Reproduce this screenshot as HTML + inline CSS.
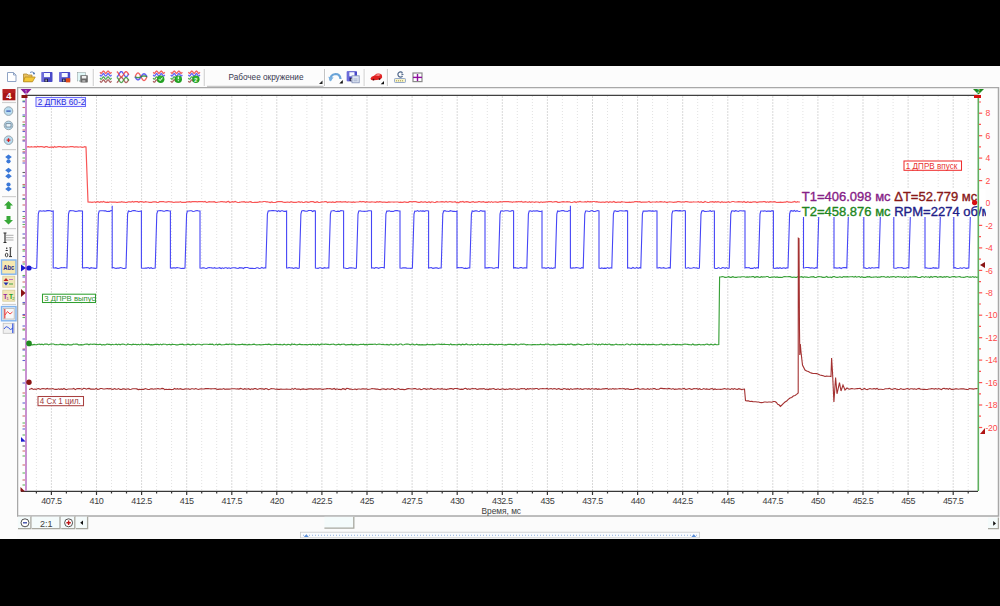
<!DOCTYPE html>
<html><head><meta charset="utf-8">
<style>
html,body{margin:0;padding:0;width:1000px;height:606px;overflow:hidden;background:#fff;}
body{position:relative;font-family:"Liberation Sans",sans-serif;}
.blk{position:absolute;left:0;width:1000px;background:#000;}
svg{position:absolute;left:0;top:0;}
</style></head><body>
<div class="blk" style="top:0;height:66px"></div>
<div class="blk" style="top:539px;height:67px"></div>
<svg width="1000" height="606" viewBox="0 0 1000 606">
<defs><clipPath id="pc"><rect x="800" y="185" width="186" height="34"/></clipPath></defs>
<rect x="0" y="66" width="1000" height="473" fill="#fbfbfb"/>
<rect x="17.5" y="87.5" width="981" height="428.5" fill="#fdfdfd" stroke="#a8a8a8" stroke-width="1.5"/>
<rect x="26" y="95" width="952" height="396" fill="#ffffff"/>
<line x1="36.4" y1="96" x2="36.4" y2="491" stroke="#e2e2e2" stroke-width="1" stroke-dasharray="1 2"/>
<line x1="51.4" y1="96" x2="51.4" y2="491" stroke="#d9d9d9" stroke-width="1" stroke-dasharray="2 1"/>
<line x1="66.4" y1="96" x2="66.4" y2="491" stroke="#e2e2e2" stroke-width="1" stroke-dasharray="1 2"/>
<line x1="81.5" y1="96" x2="81.5" y2="491" stroke="#e2e2e2" stroke-width="1" stroke-dasharray="1 2"/>
<line x1="96.5" y1="96" x2="96.5" y2="491" stroke="#d9d9d9" stroke-width="1" stroke-dasharray="2 1"/>
<line x1="111.5" y1="96" x2="111.5" y2="491" stroke="#e2e2e2" stroke-width="1" stroke-dasharray="1 2"/>
<line x1="126.5" y1="96" x2="126.5" y2="491" stroke="#e2e2e2" stroke-width="1" stroke-dasharray="1 2"/>
<line x1="141.6" y1="96" x2="141.6" y2="491" stroke="#d9d9d9" stroke-width="1" stroke-dasharray="2 1"/>
<line x1="156.6" y1="96" x2="156.6" y2="491" stroke="#e2e2e2" stroke-width="1" stroke-dasharray="1 2"/>
<line x1="171.6" y1="96" x2="171.6" y2="491" stroke="#e2e2e2" stroke-width="1" stroke-dasharray="1 2"/>
<line x1="186.7" y1="96" x2="186.7" y2="491" stroke="#d9d9d9" stroke-width="1" stroke-dasharray="2 1"/>
<line x1="201.7" y1="96" x2="201.7" y2="491" stroke="#e2e2e2" stroke-width="1" stroke-dasharray="1 2"/>
<line x1="216.7" y1="96" x2="216.7" y2="491" stroke="#e2e2e2" stroke-width="1" stroke-dasharray="1 2"/>
<line x1="231.8" y1="96" x2="231.8" y2="491" stroke="#d9d9d9" stroke-width="1" stroke-dasharray="2 1"/>
<line x1="246.8" y1="96" x2="246.8" y2="491" stroke="#e2e2e2" stroke-width="1" stroke-dasharray="1 2"/>
<line x1="261.8" y1="96" x2="261.8" y2="491" stroke="#e2e2e2" stroke-width="1" stroke-dasharray="1 2"/>
<line x1="276.8" y1="96" x2="276.8" y2="491" stroke="#d9d9d9" stroke-width="1" stroke-dasharray="2 1"/>
<line x1="291.9" y1="96" x2="291.9" y2="491" stroke="#e2e2e2" stroke-width="1" stroke-dasharray="1 2"/>
<line x1="306.9" y1="96" x2="306.9" y2="491" stroke="#e2e2e2" stroke-width="1" stroke-dasharray="1 2"/>
<line x1="321.9" y1="96" x2="321.9" y2="491" stroke="#d9d9d9" stroke-width="1" stroke-dasharray="2 1"/>
<line x1="337" y1="96" x2="337" y2="491" stroke="#e2e2e2" stroke-width="1" stroke-dasharray="1 2"/>
<line x1="352" y1="96" x2="352" y2="491" stroke="#e2e2e2" stroke-width="1" stroke-dasharray="1 2"/>
<line x1="367" y1="96" x2="367" y2="491" stroke="#d9d9d9" stroke-width="1" stroke-dasharray="2 1"/>
<line x1="382.1" y1="96" x2="382.1" y2="491" stroke="#e2e2e2" stroke-width="1" stroke-dasharray="1 2"/>
<line x1="397.1" y1="96" x2="397.1" y2="491" stroke="#e2e2e2" stroke-width="1" stroke-dasharray="1 2"/>
<line x1="412.1" y1="96" x2="412.1" y2="491" stroke="#d9d9d9" stroke-width="1" stroke-dasharray="2 1"/>
<line x1="427.1" y1="96" x2="427.1" y2="491" stroke="#e2e2e2" stroke-width="1" stroke-dasharray="1 2"/>
<line x1="442.2" y1="96" x2="442.2" y2="491" stroke="#e2e2e2" stroke-width="1" stroke-dasharray="1 2"/>
<line x1="457.2" y1="96" x2="457.2" y2="491" stroke="#d9d9d9" stroke-width="1" stroke-dasharray="2 1"/>
<line x1="472.2" y1="96" x2="472.2" y2="491" stroke="#e2e2e2" stroke-width="1" stroke-dasharray="1 2"/>
<line x1="487.3" y1="96" x2="487.3" y2="491" stroke="#e2e2e2" stroke-width="1" stroke-dasharray="1 2"/>
<line x1="502.3" y1="96" x2="502.3" y2="491" stroke="#d9d9d9" stroke-width="1" stroke-dasharray="2 1"/>
<line x1="517.3" y1="96" x2="517.3" y2="491" stroke="#e2e2e2" stroke-width="1" stroke-dasharray="1 2"/>
<line x1="532.4" y1="96" x2="532.4" y2="491" stroke="#e2e2e2" stroke-width="1" stroke-dasharray="1 2"/>
<line x1="547.4" y1="96" x2="547.4" y2="491" stroke="#d9d9d9" stroke-width="1" stroke-dasharray="2 1"/>
<line x1="562.4" y1="96" x2="562.4" y2="491" stroke="#e2e2e2" stroke-width="1" stroke-dasharray="1 2"/>
<line x1="577.4" y1="96" x2="577.4" y2="491" stroke="#e2e2e2" stroke-width="1" stroke-dasharray="1 2"/>
<line x1="592.5" y1="96" x2="592.5" y2="491" stroke="#d9d9d9" stroke-width="1" stroke-dasharray="2 1"/>
<line x1="607.5" y1="96" x2="607.5" y2="491" stroke="#e2e2e2" stroke-width="1" stroke-dasharray="1 2"/>
<line x1="622.5" y1="96" x2="622.5" y2="491" stroke="#e2e2e2" stroke-width="1" stroke-dasharray="1 2"/>
<line x1="637.6" y1="96" x2="637.6" y2="491" stroke="#d9d9d9" stroke-width="1" stroke-dasharray="2 1"/>
<line x1="652.6" y1="96" x2="652.6" y2="491" stroke="#e2e2e2" stroke-width="1" stroke-dasharray="1 2"/>
<line x1="667.6" y1="96" x2="667.6" y2="491" stroke="#e2e2e2" stroke-width="1" stroke-dasharray="1 2"/>
<line x1="682.7" y1="96" x2="682.7" y2="491" stroke="#d9d9d9" stroke-width="1" stroke-dasharray="2 1"/>
<line x1="697.7" y1="96" x2="697.7" y2="491" stroke="#e2e2e2" stroke-width="1" stroke-dasharray="1 2"/>
<line x1="712.7" y1="96" x2="712.7" y2="491" stroke="#e2e2e2" stroke-width="1" stroke-dasharray="1 2"/>
<line x1="727.8" y1="96" x2="727.8" y2="491" stroke="#d9d9d9" stroke-width="1" stroke-dasharray="2 1"/>
<line x1="742.8" y1="96" x2="742.8" y2="491" stroke="#e2e2e2" stroke-width="1" stroke-dasharray="1 2"/>
<line x1="757.8" y1="96" x2="757.8" y2="491" stroke="#e2e2e2" stroke-width="1" stroke-dasharray="1 2"/>
<line x1="772.8" y1="96" x2="772.8" y2="491" stroke="#d9d9d9" stroke-width="1" stroke-dasharray="2 1"/>
<line x1="787.9" y1="96" x2="787.9" y2="491" stroke="#e2e2e2" stroke-width="1" stroke-dasharray="1 2"/>
<line x1="802.9" y1="96" x2="802.9" y2="491" stroke="#e2e2e2" stroke-width="1" stroke-dasharray="1 2"/>
<line x1="817.9" y1="96" x2="817.9" y2="491" stroke="#d9d9d9" stroke-width="1" stroke-dasharray="2 1"/>
<line x1="833" y1="96" x2="833" y2="491" stroke="#e2e2e2" stroke-width="1" stroke-dasharray="1 2"/>
<line x1="848" y1="96" x2="848" y2="491" stroke="#e2e2e2" stroke-width="1" stroke-dasharray="1 2"/>
<line x1="863" y1="96" x2="863" y2="491" stroke="#d9d9d9" stroke-width="1" stroke-dasharray="2 1"/>
<line x1="878" y1="96" x2="878" y2="491" stroke="#e2e2e2" stroke-width="1" stroke-dasharray="1 2"/>
<line x1="893.1" y1="96" x2="893.1" y2="491" stroke="#e2e2e2" stroke-width="1" stroke-dasharray="1 2"/>
<line x1="908.1" y1="96" x2="908.1" y2="491" stroke="#d9d9d9" stroke-width="1" stroke-dasharray="2 1"/>
<line x1="923.1" y1="96" x2="923.1" y2="491" stroke="#e2e2e2" stroke-width="1" stroke-dasharray="1 2"/>
<line x1="938.2" y1="96" x2="938.2" y2="491" stroke="#e2e2e2" stroke-width="1" stroke-dasharray="1 2"/>
<line x1="953.2" y1="96" x2="953.2" y2="491" stroke="#d9d9d9" stroke-width="1" stroke-dasharray="2 1"/>
<line x1="968.2" y1="96" x2="968.2" y2="491" stroke="#e2e2e2" stroke-width="1" stroke-dasharray="1 2"/>
<line x1="26" y1="95.3" x2="978" y2="95.3" stroke="#404040" stroke-width="1.3"/>
<line x1="21" y1="491.4" x2="978" y2="491.4" stroke="#383838" stroke-width="1.4"/>
<line x1="36.4" y1="491" x2="36.4" y2="493.5" stroke="#333" stroke-width="1.2"/>
<line x1="51.4" y1="491" x2="51.4" y2="495" stroke="#333" stroke-width="1.2"/>
<line x1="66.4" y1="491" x2="66.4" y2="493.5" stroke="#333" stroke-width="1.2"/>
<line x1="81.5" y1="491" x2="81.5" y2="493.5" stroke="#333" stroke-width="1.2"/>
<line x1="96.5" y1="491" x2="96.5" y2="495" stroke="#333" stroke-width="1.2"/>
<line x1="111.5" y1="491" x2="111.5" y2="493.5" stroke="#333" stroke-width="1.2"/>
<line x1="126.5" y1="491" x2="126.5" y2="493.5" stroke="#333" stroke-width="1.2"/>
<line x1="141.6" y1="491" x2="141.6" y2="495" stroke="#333" stroke-width="1.2"/>
<line x1="156.6" y1="491" x2="156.6" y2="493.5" stroke="#333" stroke-width="1.2"/>
<line x1="171.6" y1="491" x2="171.6" y2="493.5" stroke="#333" stroke-width="1.2"/>
<line x1="186.7" y1="491" x2="186.7" y2="495" stroke="#333" stroke-width="1.2"/>
<line x1="201.7" y1="491" x2="201.7" y2="493.5" stroke="#333" stroke-width="1.2"/>
<line x1="216.7" y1="491" x2="216.7" y2="493.5" stroke="#333" stroke-width="1.2"/>
<line x1="231.8" y1="491" x2="231.8" y2="495" stroke="#333" stroke-width="1.2"/>
<line x1="246.8" y1="491" x2="246.8" y2="493.5" stroke="#333" stroke-width="1.2"/>
<line x1="261.8" y1="491" x2="261.8" y2="493.5" stroke="#333" stroke-width="1.2"/>
<line x1="276.8" y1="491" x2="276.8" y2="495" stroke="#333" stroke-width="1.2"/>
<line x1="291.9" y1="491" x2="291.9" y2="493.5" stroke="#333" stroke-width="1.2"/>
<line x1="306.9" y1="491" x2="306.9" y2="493.5" stroke="#333" stroke-width="1.2"/>
<line x1="321.9" y1="491" x2="321.9" y2="495" stroke="#333" stroke-width="1.2"/>
<line x1="337" y1="491" x2="337" y2="493.5" stroke="#333" stroke-width="1.2"/>
<line x1="352" y1="491" x2="352" y2="493.5" stroke="#333" stroke-width="1.2"/>
<line x1="367" y1="491" x2="367" y2="495" stroke="#333" stroke-width="1.2"/>
<line x1="382.1" y1="491" x2="382.1" y2="493.5" stroke="#333" stroke-width="1.2"/>
<line x1="397.1" y1="491" x2="397.1" y2="493.5" stroke="#333" stroke-width="1.2"/>
<line x1="412.1" y1="491" x2="412.1" y2="495" stroke="#333" stroke-width="1.2"/>
<line x1="427.1" y1="491" x2="427.1" y2="493.5" stroke="#333" stroke-width="1.2"/>
<line x1="442.2" y1="491" x2="442.2" y2="493.5" stroke="#333" stroke-width="1.2"/>
<line x1="457.2" y1="491" x2="457.2" y2="495" stroke="#333" stroke-width="1.2"/>
<line x1="472.2" y1="491" x2="472.2" y2="493.5" stroke="#333" stroke-width="1.2"/>
<line x1="487.3" y1="491" x2="487.3" y2="493.5" stroke="#333" stroke-width="1.2"/>
<line x1="502.3" y1="491" x2="502.3" y2="495" stroke="#333" stroke-width="1.2"/>
<line x1="517.3" y1="491" x2="517.3" y2="493.5" stroke="#333" stroke-width="1.2"/>
<line x1="532.4" y1="491" x2="532.4" y2="493.5" stroke="#333" stroke-width="1.2"/>
<line x1="547.4" y1="491" x2="547.4" y2="495" stroke="#333" stroke-width="1.2"/>
<line x1="562.4" y1="491" x2="562.4" y2="493.5" stroke="#333" stroke-width="1.2"/>
<line x1="577.4" y1="491" x2="577.4" y2="493.5" stroke="#333" stroke-width="1.2"/>
<line x1="592.5" y1="491" x2="592.5" y2="495" stroke="#333" stroke-width="1.2"/>
<line x1="607.5" y1="491" x2="607.5" y2="493.5" stroke="#333" stroke-width="1.2"/>
<line x1="622.5" y1="491" x2="622.5" y2="493.5" stroke="#333" stroke-width="1.2"/>
<line x1="637.6" y1="491" x2="637.6" y2="495" stroke="#333" stroke-width="1.2"/>
<line x1="652.6" y1="491" x2="652.6" y2="493.5" stroke="#333" stroke-width="1.2"/>
<line x1="667.6" y1="491" x2="667.6" y2="493.5" stroke="#333" stroke-width="1.2"/>
<line x1="682.7" y1="491" x2="682.7" y2="495" stroke="#333" stroke-width="1.2"/>
<line x1="697.7" y1="491" x2="697.7" y2="493.5" stroke="#333" stroke-width="1.2"/>
<line x1="712.7" y1="491" x2="712.7" y2="493.5" stroke="#333" stroke-width="1.2"/>
<line x1="727.8" y1="491" x2="727.8" y2="495" stroke="#333" stroke-width="1.2"/>
<line x1="742.8" y1="491" x2="742.8" y2="493.5" stroke="#333" stroke-width="1.2"/>
<line x1="757.8" y1="491" x2="757.8" y2="493.5" stroke="#333" stroke-width="1.2"/>
<line x1="772.8" y1="491" x2="772.8" y2="495" stroke="#333" stroke-width="1.2"/>
<line x1="787.9" y1="491" x2="787.9" y2="493.5" stroke="#333" stroke-width="1.2"/>
<line x1="802.9" y1="491" x2="802.9" y2="493.5" stroke="#333" stroke-width="1.2"/>
<line x1="817.9" y1="491" x2="817.9" y2="495" stroke="#333" stroke-width="1.2"/>
<line x1="833" y1="491" x2="833" y2="493.5" stroke="#333" stroke-width="1.2"/>
<line x1="848" y1="491" x2="848" y2="493.5" stroke="#333" stroke-width="1.2"/>
<line x1="863" y1="491" x2="863" y2="495" stroke="#333" stroke-width="1.2"/>
<line x1="878" y1="491" x2="878" y2="493.5" stroke="#333" stroke-width="1.2"/>
<line x1="893.1" y1="491" x2="893.1" y2="493.5" stroke="#333" stroke-width="1.2"/>
<line x1="908.1" y1="491" x2="908.1" y2="495" stroke="#333" stroke-width="1.2"/>
<line x1="923.1" y1="491" x2="923.1" y2="493.5" stroke="#333" stroke-width="1.2"/>
<line x1="938.2" y1="491" x2="938.2" y2="493.5" stroke="#333" stroke-width="1.2"/>
<line x1="953.2" y1="491" x2="953.2" y2="495" stroke="#333" stroke-width="1.2"/>
<line x1="968.2" y1="491" x2="968.2" y2="493.5" stroke="#333" stroke-width="1.2"/>
<g font-family="Liberation Sans" font-size="9" fill="#3c3c3c" style="letter-spacing:-0.4px"><text x="51.4" y="503.6" text-anchor="middle">407.5</text><text x="96.5" y="503.6" text-anchor="middle">410</text><text x="141.6" y="503.6" text-anchor="middle">412.5</text><text x="186.7" y="503.6" text-anchor="middle">415</text><text x="231.8" y="503.6" text-anchor="middle">417.5</text><text x="276.9" y="503.6" text-anchor="middle">420</text><text x="321.9" y="503.6" text-anchor="middle">422.5</text><text x="367" y="503.6" text-anchor="middle">425</text><text x="412.1" y="503.6" text-anchor="middle">427.5</text><text x="457.2" y="503.6" text-anchor="middle">430</text><text x="502.3" y="503.6" text-anchor="middle">432.5</text><text x="547.4" y="503.6" text-anchor="middle">435</text><text x="592.5" y="503.6" text-anchor="middle">437.5</text><text x="637.6" y="503.6" text-anchor="middle">440</text><text x="682.7" y="503.6" text-anchor="middle">442.5</text><text x="727.8" y="503.6" text-anchor="middle">445</text><text x="772.8" y="503.6" text-anchor="middle">447.5</text><text x="817.9" y="503.6" text-anchor="middle">450</text><text x="863" y="503.6" text-anchor="middle">452.5</text><text x="908.1" y="503.6" text-anchor="middle">455</text><text x="953.2" y="503.6" text-anchor="middle">457.5</text></g>
<text x="481.5" y="513.5" font-family="Liberation Sans" font-size="9" fill="#3c3c3c" textLength="39.5" lengthAdjust="spacingAndGlyphs">Время, мс</text>
<line x1="979" y1="113.2" x2="982.2" y2="113.2" stroke="#ff5050" stroke-width="1.2"/>
<line x1="979" y1="124.4" x2="981" y2="124.4" stroke="#ff5050" stroke-width="1.2"/>
<line x1="979" y1="135.7" x2="982.2" y2="135.7" stroke="#ff5050" stroke-width="1.2"/>
<line x1="979" y1="146.8" x2="981" y2="146.8" stroke="#ff5050" stroke-width="1.2"/>
<line x1="979" y1="158.1" x2="982.2" y2="158.1" stroke="#ff5050" stroke-width="1.2"/>
<line x1="979" y1="169.3" x2="981" y2="169.3" stroke="#ff5050" stroke-width="1.2"/>
<line x1="979" y1="180.6" x2="982.2" y2="180.6" stroke="#ff5050" stroke-width="1.2"/>
<line x1="979" y1="191.8" x2="981" y2="191.8" stroke="#ff5050" stroke-width="1.2"/>
<line x1="979" y1="203" x2="982.2" y2="203" stroke="#ff5050" stroke-width="1.2"/>
<line x1="979" y1="214.2" x2="981" y2="214.2" stroke="#ff5050" stroke-width="1.2"/>
<line x1="979" y1="225.4" x2="982.2" y2="225.4" stroke="#ff5050" stroke-width="1.2"/>
<line x1="979" y1="236.6" x2="981" y2="236.6" stroke="#ff5050" stroke-width="1.2"/>
<line x1="979" y1="247.9" x2="982.2" y2="247.9" stroke="#ff5050" stroke-width="1.2"/>
<line x1="979" y1="259.1" x2="981" y2="259.1" stroke="#ff5050" stroke-width="1.2"/>
<line x1="979" y1="270.4" x2="982.2" y2="270.4" stroke="#ff5050" stroke-width="1.2"/>
<line x1="979" y1="281.6" x2="981" y2="281.6" stroke="#ff5050" stroke-width="1.2"/>
<line x1="979" y1="292.8" x2="982.2" y2="292.8" stroke="#ff5050" stroke-width="1.2"/>
<line x1="979" y1="304" x2="981" y2="304" stroke="#ff5050" stroke-width="1.2"/>
<line x1="979" y1="315.2" x2="982.2" y2="315.2" stroke="#ff5050" stroke-width="1.2"/>
<line x1="979" y1="326.4" x2="981" y2="326.4" stroke="#ff5050" stroke-width="1.2"/>
<line x1="979" y1="337.7" x2="982.2" y2="337.7" stroke="#ff5050" stroke-width="1.2"/>
<line x1="979" y1="348.9" x2="981" y2="348.9" stroke="#ff5050" stroke-width="1.2"/>
<line x1="979" y1="360.1" x2="982.2" y2="360.1" stroke="#ff5050" stroke-width="1.2"/>
<line x1="979" y1="371.3" x2="981" y2="371.3" stroke="#ff5050" stroke-width="1.2"/>
<line x1="979" y1="382.6" x2="982.2" y2="382.6" stroke="#ff5050" stroke-width="1.2"/>
<line x1="979" y1="393.8" x2="981" y2="393.8" stroke="#ff5050" stroke-width="1.2"/>
<line x1="979" y1="405" x2="982.2" y2="405" stroke="#ff5050" stroke-width="1.2"/>
<line x1="979" y1="416.2" x2="981" y2="416.2" stroke="#ff5050" stroke-width="1.2"/>
<line x1="979" y1="427.5" x2="982.2" y2="427.5" stroke="#ff5050" stroke-width="1.2"/>
<line x1="979" y1="102" x2="981" y2="102" stroke="#ff5050" stroke-width="1.2"/>
<g font-family="Liberation Sans" font-size="8.6" fill="#ff4848" style="letter-spacing:-0.2px"><text x="985.4" y="116.3">8</text><text x="985.4" y="138.8">6</text><text x="985.4" y="161.2">4</text><text x="985.4" y="183.7">2</text><text x="985.4" y="206.1">0</text><text x="985.4" y="228.5">-2</text><text x="985.4" y="251">-4</text><text x="985.4" y="273.5">-6</text><text x="985.4" y="295.9">-8</text><text x="985.4" y="318.4">-10</text><text x="985.4" y="340.8">-12</text><text x="985.4" y="363.2">-14</text><text x="985.4" y="385.7">-16</text><text x="985.4" y="408.1">-18</text><text x="985.4" y="430.6">-20</text></g>
<path d="M26 147 L27.3 146.8 L28.6 146.7 L29.9 147.2 L31.2 146.6 L32.5 147 L33.8 146.9 L35.1 146.6 L36.4 147 L37.7 146.5 L39 146.9 L40.3 146.6 L41.7 146.6 L43 146.9 L44.3 147.3 L45.6 146.6 L46.9 146.7 L48.2 147.1 L49.5 147.4 L50.8 147.1 L52.1 146.9 L53.4 147.5 L54.7 146.5 L56 147.4 L57.3 146.8 L58.6 146.6 L59.9 146.6 L61.2 146.8 L62.5 147.3 L63.8 146.7 L65.1 147.1 L66.4 147.1 L67.7 146.9 L69 147 L70.3 146.6 L71.7 146.6 L73 146.7 L74.3 147.2 L75.6 146.9 L76.9 146.8 L78.2 147.1 L79.5 147 L80.8 146.8 L82.1 147.3 L83.4 147.2 L84.7 146.7 L86 147 L88 202 L89.3 202.1 L90.6 202 L91.9 202.4 L93.2 202.2 L94.5 201.8 L95.8 202.5 L97.1 201.6 L98.4 201.9 L99.7 202.3 L101 201.7 L102.3 202 L103.6 201.5 L104.9 202.2 L106.2 202.3 L107.5 202.1 L108.8 202.4 L110.1 201.8 L111.4 202.2 L112.7 202.1 L114 202.1 L115.3 202 L116.6 202.3 L117.9 202.4 L119.2 202 L120.5 202.2 L121.8 201.6 L123.1 202.2 L124.4 202.1 L125.7 202.5 L127 202.3 L128.4 201.8 L129.7 201.9 L131 202.2 L132.3 201.5 L133.6 202 L134.9 201.7 L136.2 201.6 L137.5 201.6 L138.8 202.3 L140.1 201.6 L141.4 201.7 L142.7 201.9 L144 202.4 L145.3 201.6 L146.6 201.9 L147.9 202 L149.2 202.4 L150.5 202.3 L151.8 202.4 L153.1 201.8 L154.4 201.9 L155.7 201.9 L157 202.4 L158.3 202.5 L159.6 201.7 L160.9 201.7 L162.2 201.7 L163.5 201.7 L164.8 202 L166.1 202.1 L167.4 201.8 L168.7 201.5 L170 201.9 L171.3 201.9 L172.6 202.1 L173.9 202.5 L175.2 202.2 L176.5 202 L177.8 202.1 L179.1 202.2 L180.4 201.6 L181.7 202.4 L183 202.3 L184.3 202.4 L185.6 202.3 L186.9 201.9 L188.2 201.9 L189.5 201.6 L190.8 202.1 L192.1 201.6 L193.4 201.6 L194.7 201.7 L196 201.7 L197.3 201.8 L198.6 201.6 L199.9 201.5 L201.2 201.7 L202.5 201.6 L203.8 201.9 L205.1 201.5 L206.4 202.4 L207.8 202.1 L209.1 201.6 L210.4 201.8 L211.7 201.8 L213 201.9 L214.3 201.6 L215.6 202.3 L216.9 202.5 L218.2 202 L219.5 202 L220.8 201.6 L222.1 201.6 L223.4 201.8 L224.7 201.8 L226 202.3 L227.3 201.7 L228.6 201.5 L229.9 202.5 L231.2 202 L232.5 201.6 L233.8 202 L235.1 201.5 L236.4 202 L237.7 202.5 L239 202.4 L240.3 202.2 L241.6 201.8 L242.9 201.9 L244.2 201.7 L245.5 202.3 L246.8 202 L248.1 202.3 L249.4 201.8 L250.7 201.7 L252 202.3 L253.3 202.5 L254.6 202.4 L255.9 202.3 L257.2 202.3 L258.5 202.2 L259.8 201.7 L261.1 202 L262.4 201.9 L263.7 201.5 L265 201.5 L266.3 201.8 L267.6 201.8 L268.9 202.2 L270.2 202.5 L271.5 201.9 L272.8 202.4 L274.1 202.5 L275.4 202.5 L276.7 201.9 L278 201.7 L279.3 201.7 L280.6 201.7 L281.9 201.7 L283.2 202.1 L284.5 202.4 L285.9 202.3 L287.2 202 L288.5 202.2 L289.8 202.3 L291.1 201.6 L292.4 202.2 L293.7 202.4 L295 202.3 L296.3 202.3 L297.6 202 L298.9 201.7 L300.2 202.3 L301.5 201.8 L302.8 202.3 L304.1 202.5 L305.4 201.9 L306.7 201.9 L308 202.4 L309.3 202.2 L310.6 201.7 L311.9 201.6 L313.2 201.7 L314.5 202.4 L315.8 202.3 L317.1 201.6 L318.4 202.3 L319.7 202.5 L321 202.2 L322.3 201.9 L323.6 202 L324.9 201.6 L326.2 201.5 L327.5 202.5 L328.8 202.1 L330.1 202 L331.4 202.4 L332.7 201.9 L334 202.4 L335.3 202.3 L336.6 201.7 L337.9 201.8 L339.2 201.8 L340.5 201.7 L341.8 202.1 L343.1 201.8 L344.4 201.9 L345.7 201.6 L347 202.4 L348.3 201.9 L349.6 202 L350.9 202.1 L352.2 202.4 L353.5 201.9 L354.8 202.4 L356.1 202 L357.4 202 L358.7 202 L360 201.5 L361.3 201.9 L362.6 201.7 L363.9 201.5 L365.3 202.3 L366.6 201.7 L367.9 202 L369.2 202.2 L370.5 202.1 L371.8 201.8 L373.1 202 L374.4 202.1 L375.7 202.3 L377 201.6 L378.3 202.1 L379.6 201.7 L380.9 201.8 L382.2 202.3 L383.5 202 L384.8 202.1 L386.1 202.3 L387.4 202.4 L388.7 201.9 L390 202.1 L391.3 202 L392.6 202 L393.9 202.2 L395.2 202 L396.5 202 L397.8 202 L399.1 202.4 L400.4 202.2 L401.7 202.4 L403 202.4 L404.3 201.8 L405.6 202.1 L406.9 202.4 L408.2 202.3 L409.5 201.6 L410.8 201.6 L412.1 201.9 L413.4 201.6 L414.7 201.7 L416 201.6 L417.3 202.2 L418.6 202.3 L419.9 202.4 L421.2 201.7 L422.5 202.2 L423.8 202.2 L425.1 201.6 L426.4 202.4 L427.7 202.5 L429 201.7 L430.3 202.5 L431.6 201.9 L432.9 202 L434.2 202.5 L435.5 202.3 L436.8 201.7 L438.1 201.9 L439.4 202 L440.7 201.8 L442 201.7 L443.3 201.8 L444.7 202.2 L446 201.5 L447.3 202.1 L448.6 201.9 L449.9 201.5 L451.2 201.8 L452.5 202.1 L453.8 202 L455.1 201.6 L456.4 202.5 L457.7 202.3 L459 202.5 L460.3 201.6 L461.6 201.8 L462.9 201.5 L464.2 202.3 L465.5 201.8 L466.8 201.6 L468.1 201.9 L469.4 202.4 L470.7 202.3 L472 201.8 L473.3 201.6 L474.6 202.4 L475.9 202.1 L477.2 202.2 L478.5 201.6 L479.8 201.6 L481.1 202.2 L482.4 201.9 L483.7 201.6 L485 202.4 L486.3 202.1 L487.6 202.3 L488.9 201.6 L490.2 202.4 L491.5 201.6 L492.8 202.4 L494.1 202 L495.4 201.8 L496.7 202.1 L498 202.4 L499.3 201.8 L500.6 201.6 L501.9 202 L503.2 201.7 L504.5 201.6 L505.8 201.7 L507.1 201.6 L508.4 201.7 L509.7 201.8 L511 201.8 L512.3 202.3 L513.6 201.8 L514.9 202 L516.2 201.7 L517.5 201.8 L518.8 201.5 L520.1 201.8 L521.4 201.5 L522.7 202.2 L524.1 202.1 L525.4 201.7 L526.7 202 L528 202.4 L529.3 201.6 L530.6 202.3 L531.9 201.9 L533.2 202 L534.5 202.3 L535.8 201.9 L537.1 202 L538.4 202.2 L539.7 202.5 L541 201.8 L542.3 202.3 L543.6 202.2 L544.9 202.1 L546.2 201.9 L547.5 201.8 L548.8 201.6 L550.1 201.6 L551.4 201.6 L552.7 202.2 L554 201.8 L555.3 201.7 L556.6 201.6 L557.9 202.3 L559.2 202.4 L560.5 202.2 L561.8 201.8 L563.1 201.7 L564.4 201.8 L565.7 202 L567 201.7 L568.3 201.9 L569.6 201.8 L570.9 202.5 L572.2 202.5 L573.5 202 L574.8 201.7 L576.1 202.5 L577.4 201.8 L578.7 201.9 L580 201.5 L581.3 201.9 L582.6 202 L583.9 202 L585.2 201.7 L586.5 202 L587.8 201.5 L589.1 201.8 L590.4 201.6 L591.7 201.9 L593 201.5 L594.3 201.5 L595.6 201.8 L596.9 201.7 L598.2 202.1 L599.5 202 L600.8 202.3 L602.1 202.2 L603.5 202.2 L604.8 202.4 L606.1 201.9 L607.4 201.8 L608.7 202.5 L610 201.6 L611.3 202.2 L612.6 202.1 L613.9 201.5 L615.2 202.3 L616.5 202.4 L617.8 202.1 L619.1 202.2 L620.4 202.3 L621.7 201.6 L623 202 L624.3 202 L625.6 202.3 L626.9 202.3 L628.2 202.3 L629.5 202.1 L630.8 202.4 L632.1 202.2 L633.4 202.2 L634.7 201.7 L636 201.5 L637.3 201.6 L638.6 201.9 L639.9 201.6 L641.2 202.3 L642.5 202.1 L643.8 202.1 L645.1 202.1 L646.4 202.2 L647.7 202 L649 201.5 L650.3 202.3 L651.6 202.2 L652.9 202 L654.2 202 L655.5 202.2 L656.8 201.6 L658.1 202.2 L659.4 201.8 L660.7 201.6 L662 201.8 L663.3 202.2 L664.6 201.7 L665.9 202.2 L667.2 202.5 L668.5 202 L669.8 201.9 L671.1 202 L672.4 202.2 L673.7 202.3 L675 202.1 L676.3 202.1 L677.6 201.6 L678.9 201.6 L680.2 201.8 L681.6 202.2 L682.9 201.8 L684.2 202.1 L685.5 201.5 L686.8 201.6 L688.1 201.8 L689.4 202.2 L690.7 202.2 L692 202.2 L693.3 201.8 L694.6 202 L695.9 202 L697.2 202 L698.5 201.6 L699.8 202.4 L701.1 201.7 L702.4 202.5 L703.7 202.4 L705 201.5 L706.3 202 L707.6 202.3 L708.9 202.5 L710.2 201.9 L711.5 201.8 L712.8 201.7 L714.1 202.4 L715.4 201.7 L716.7 202.1 L718 201.6 L719.3 202 L720.6 202.5 L721.9 201.6 L723.2 202.3 L724.5 202 L725.8 202.4 L727.1 202.2 L728.4 201.7 L729.7 202.4 L731 202 L732.3 201.5 L733.6 201.5 L734.9 202 L736.2 202 L737.5 201.8 L738.8 201.6 L740.1 201.8 L741.4 201.8 L742.7 202.3 L744 201.5 L745.3 202.3 L746.6 202.3 L747.9 201.6 L749.2 202.4 L750.5 202.2 L751.8 202.4 L753.1 201.8 L754.4 201.9 L755.7 201.9 L757 202.5 L758.3 202.1 L759.6 201.9 L761 201.9 L762.3 201.8 L763.6 201.5 L764.9 201.6 L766.2 202.3 L767.5 201.8 L768.8 202.4 L770.1 201.7 L771.4 201.8 L772.7 202 L774 201.7 L775.3 201.9 L776.6 202.5 L777.9 202.4 L779.2 202.3 L780.5 202.1 L781.8 202.4 L783.1 202.4 L784.4 202 L785.7 202.2 L787 201.5 L788.3 202.2 L789.6 202 L790.9 202.3 L792.2 202.1 L793.5 201.8 L794.8 201.5 L796.1 202.4 L797.4 201.6 L798.7 202 L800 202" fill="none" stroke="#f85656" stroke-width="1.2"/>
<path d="M29 268 L30.5 267.8 L32.1 267.8 L33.6 268.3 L35.2 268.5 L36.7 268 L38.3 214 L39.1 211 L40.5 210.7 L41.9 211.2 L43.3 210.8 L44.7 211.1 L46.1 210.9 L47.6 210.6 L49 210.6 L50.4 210.7 L51.8 211.4 L53.2 211 L53.2 268 L54.6 268 L55.9 267.7 L57.3 268.4 L58.7 268.5 L60 267.9 L61.4 267.6 L62.8 267.7 L64.2 267.5 L65.5 267.8 L66.9 268 L68.5 214 L69.3 211 L70.6 210.6 L71.9 210.7 L73.3 210.7 L74.6 211.1 L75.9 211.4 L77.2 211.3 L78.5 210.9 L79.9 210.9 L81.2 211 L82.5 211 L82.5 268 L83.9 267.9 L85.4 267.8 L86.8 267.5 L88.2 267.8 L89.7 268.5 L91.1 267.6 L92.5 268 L93.9 268.1 L95.4 268.4 L96.8 268 L98.4 214 L99.2 211 L100.5 210.7 L101.8 210.7 L103.1 210.7 L104.4 210.9 L105.7 210.9 L107 211.5 L108.3 211.4 L109.6 211.4 L110.9 210.5 L112.2 211 L112.2 205.8 L112.2 268 L113.6 267.5 L115 268.2 L116.3 268.4 L117.7 268 L119.1 268.1 L120.5 267.5 L121.9 267.9 L123.2 268.5 L124.6 268.4 L126 268 L127.6 214 L128.4 211 L129.7 211.4 L131 211.5 L132.3 210.7 L133.6 210.6 L134.9 210.6 L136.2 211 L137.5 211.2 L138.8 211.5 L140.1 211.2 L141.4 211 L141.4 268 L142.8 268.2 L144.2 268.3 L145.5 268 L146.9 268.1 L148.3 267.5 L149.7 268.3 L151.1 267.7 L152.4 268.5 L153.8 268.2 L155.2 268 L156.8 214 L157.6 211 L159 210.8 L160.4 210.6 L161.9 210.7 L163.3 211.1 L164.7 211.2 L166.1 210.6 L167.6 210.5 L169 211 L170.4 211 L170.4 268 L171.7 268.1 L173.1 267.9 L174.4 267.7 L175.7 268.1 L177 267.5 L178.4 267.8 L179.7 268 L181 268.5 L182.3 268.2 L183.7 268.4 L185 268 L186.6 214 L187.4 211 L188.8 211 L190.2 210.7 L191.6 210.7 L193 211.5 L194.4 211.2 L195.8 210.8 L197.2 210.5 L198.6 211 L200 211 L200 268 L201.3 268.2 L202.6 267.9 L203.9 267.7 L205.3 268.2 L206.6 268.5 L207.9 267.7 L209.2 267.5 L210.5 267.8 L211.8 267.9 L213.2 268.2 L214.5 267.7 L215.8 268.3 L217.1 268.3 L218.4 268 L219.7 267.7 L221.1 268.5 L222.4 267.8 L223.7 268.4 L225 267.7 L226.3 267.7 L227.6 268.3 L229 267.8 L230.3 268.5 L231.6 268 L232.9 267.7 L234.2 267.7 L235.5 267.9 L236.8 268.2 L238.2 268.5 L239.5 267.6 L240.8 267.9 L242.1 267.7 L243.4 268.5 L244.7 267.6 L246.1 267.5 L247.4 267.5 L248.7 267.9 L250 268.4 L251.3 268.4 L252.6 268.3 L254 268.5 L255.3 268.5 L256.6 267.8 L257.9 267.7 L259.2 268.5 L260.5 268.3 L261.9 267.5 L263.2 268.2 L264.5 267.9 L265.8 268 L267.4 214 L268.2 211 L269.5 210.9 L270.8 210.8 L272.1 210.6 L273.5 210.5 L274.8 210.8 L276.1 210.8 L277.4 211.5 L278.7 210.6 L280 211.5 L281.3 210.7 L282.7 210.8 L284 211.4 L285.3 211.4 L286.6 211 L286.6 268 L288 267.9 L289.4 267.5 L290.8 268 L292.2 267.9 L293.7 268.5 L295.1 267.7 L296.5 267.9 L297.9 268.4 L299.3 268 L300.9 214 L301.7 211 L303.1 210.5 L304.4 210.9 L305.8 211.3 L307.2 211.3 L308.5 210.5 L309.9 210.5 L311.3 210.5 L312.7 211.5 L314 210.7 L315.4 211 L315.4 268 L316.7 268.3 L318.1 268.4 L319.4 267.8 L320.8 267.7 L322.1 268.5 L323.4 268.1 L324.8 267.7 L326.1 268.2 L327.5 267.8 L328.8 268 L330.4 214 L331.2 211 L332.6 210.8 L334 210.5 L335.3 211.3 L336.7 211.5 L338.1 211.1 L339.5 211.5 L340.8 210.5 L342.2 210.7 L343.6 211 L343.6 268 L345 268 L346.4 268.5 L347.9 268.5 L349.3 267.9 L350.7 267.7 L352.1 267.9 L353.6 268 L355 268.5 L356.4 268 L358 214 L358.8 211 L360.2 210.7 L361.6 211.3 L363 211.3 L364.4 211.4 L365.9 211.3 L367.3 211.1 L368.7 210.8 L370.1 210.8 L371.5 211 L371.5 268 L372.9 267.8 L374.3 268.3 L375.8 267.5 L377.2 267.7 L378.6 268.3 L380 267.7 L381.5 267.5 L382.9 267.5 L384.3 268 L385.9 214 L386.7 211 L388 211.1 L389.4 210.8 L390.7 211.5 L392 211.4 L393.4 211.5 L394.7 210.7 L396 210.5 L397.3 210.6 L398.7 211 L400 211 L400 268 L401.4 268.2 L402.8 267.9 L404.1 267.7 L405.5 267.9 L406.9 268.1 L408.3 268.2 L409.6 268.3 L411 268.4 L412.4 268 L414 214 L414.8 211 L416.2 211.2 L417.6 210.6 L418.9 211.4 L420.3 210.8 L421.7 211.1 L423.1 210.9 L424.5 211.3 L425.8 210.7 L427.2 210.7 L428.6 211 L428.6 268 L430 267.7 L431.4 267.6 L432.8 268.4 L434.2 268.1 L435.6 267.8 L437 267.9 L438.4 268.5 L439.8 268 L441.2 268 L442.8 214 L443.6 211 L444.9 210.7 L446.3 211.3 L447.6 211.2 L449 211.5 L450.3 210.6 L451.6 211 L453 211.4 L454.3 211.4 L455.7 211.5 L457 211 L457 268 L458.4 267.5 L459.8 267.8 L461.3 267.6 L462.7 267.7 L464.1 268.5 L465.5 268.1 L467 268.5 L468.4 267.9 L469.8 268 L471.4 214 L472.2 211 L473.6 211.4 L475 210.9 L476.5 210.7 L477.9 211.3 L479.3 211.5 L480.7 210.6 L482.2 211.1 L483.6 211.1 L485 211 L485 268 L486.3 267.7 L487.7 267.9 L489 267.6 L490.4 267.7 L491.7 267.7 L493 268.1 L494.4 268.2 L495.7 267.7 L497.1 267.5 L498.4 268 L500 214 L500.8 211 L502.2 210.8 L503.6 211.2 L505.1 210.7 L506.5 210.8 L507.9 210.7 L509.3 211.3 L510.8 211.1 L512.2 210.5 L513.6 211 L513.6 268 L514.9 267.6 L516.2 267.9 L517.6 268.1 L518.9 268.2 L520.2 267.6 L521.5 267.6 L522.8 268.2 L524.2 267.9 L525.5 267.8 L526.8 268 L528.4 214 L529.2 211 L530.6 210.8 L532 211.5 L533.5 210.8 L534.9 211.1 L536.3 210.8 L537.7 210.9 L539.2 211.4 L540.6 211.5 L542 211 L542 268 L543.3 267.9 L544.6 267.7 L546 268.3 L547.3 267.7 L548.6 267.5 L549.9 268.4 L551.2 267.9 L552.6 268.4 L553.9 267.9 L555.2 268 L556.8 214 L557.6 211 L559 211.4 L560.4 211 L561.9 210.6 L563.3 210.5 L564.7 211.1 L566.1 211.2 L567.6 211.5 L569 210.5 L570.4 211 L570.4 205.8 L570.4 268 L571.8 268.1 L573.2 267.9 L574.7 268 L576.1 267.6 L577.5 267.8 L578.9 268 L580.4 268.5 L581.8 267.6 L583.2 268 L584.8 214 L585.6 211 L586.9 211 L588.3 211.3 L589.6 211.5 L591 210.7 L592.3 210.6 L593.6 211.5 L595 211.5 L596.3 211 L597.7 210.5 L599 211 L599 268 L600.4 268.5 L601.8 267.9 L603.3 268.4 L604.7 268.1 L606.1 268.4 L607.5 267.6 L609 268.3 L610.4 267.7 L611.8 268 L613.4 214 L614.2 211 L615.5 210.9 L616.9 211.4 L618.2 211.4 L619.6 210.7 L620.9 210.7 L622.2 210.9 L623.6 211 L624.9 210.9 L626.3 210.6 L627.6 211 L627.6 268 L628.9 267.7 L630.2 268.2 L631.6 268.4 L632.9 267.5 L634.2 268.1 L635.5 268.3 L636.8 267.5 L638.2 268.4 L639.5 267.6 L640.8 268 L642.4 214 L643.2 211 L644.6 211.1 L646 211.1 L647.3 211.1 L648.7 210.8 L650.1 210.9 L651.5 211.1 L652.9 210.9 L654.2 211.2 L655.6 210.9 L657 211 L657 268 L658.3 267.9 L659.7 267.5 L661 268.1 L662.3 268 L663.6 267.7 L665 268.3 L666.3 268.3 L667.6 268 L669 267.6 L670.3 268 L671.9 214 L672.7 211 L674.1 211 L675.5 210.6 L676.9 210.6 L678.3 210.9 L679.8 210.6 L681.2 210.9 L682.6 211 L684 210.5 L685.4 211 L685.4 268 L686.8 268.2 L688.2 267.5 L689.6 268.3 L691 268.3 L692.4 268 L693.8 267.5 L695.2 268 L696.6 267.9 L698 268.5 L699.4 268 L701 214 L701.8 211 L703.2 210.6 L704.6 211.4 L706 211.5 L707.4 211.3 L708.8 211.3 L710.2 210.7 L711.6 211.5 L713 211 L714.4 211 L714.4 268 L715.7 268.5 L717.1 268.5 L718.4 267.6 L719.8 268.3 L721.1 268.5 L722.5 267.5 L723.8 267.8 L725.2 268.3 L726.5 267.6 L727.9 268.4 L729.2 268 L730.8 214 L731.6 211 L732.9 210.8 L734.3 211.3 L735.6 210.6 L737 211 L738.3 211.5 L739.6 210.7 L741 210.7 L742.3 211 L743.7 210.8 L745 211 L745 268 L746.3 267.5 L747.7 267.7 L749 267.6 L750.4 268.5 L751.7 268.2 L753 268.4 L754.4 267.6 L755.7 268.3 L757.1 267.6 L758.4 268 L760 214 L760.8 211 L762.2 211 L763.6 211.1 L765 210.8 L766.4 211.4 L767.8 211.1 L769.2 211.1 L770.6 211.4 L772 210.6 L773.4 211 L773.4 268 L774.7 268.5 L776.1 268.1 L777.4 267.9 L778.7 268.3 L780 267.7 L781.4 268.5 L782.7 268.1 L784 267.8 L785.3 268.3 L786.7 267.9 L788 268 L789.6 214 L790.4 211 L791.7 210.6 L793 211.3 L794.3 210.5 L795.6 211.4 L797 210.7 L798.3 211.2 L799.6 211.5 L800.9 211.1 L802.2 211.2 L803.5 211 L803.5 268 L804.9 267.8 L806.2 267.5 L807.6 267.5 L809 267.6 L810.3 268.1 L811.7 267.9 L813.1 268 L814.5 268.4 L815.8 267.6 L817.2 268 L818.8 214 L819.6 211 L820.9 210.7 L822.2 211.2 L823.5 210.5 L824.8 210.5 L826.1 210.8 L827.5 210.6 L828.8 210.8 L830.1 210.7 L831.4 211.1 L832.7 211.1 L834 211 L834 268 L835.4 267.7 L836.8 268.1 L838.3 268 L839.7 267.6 L841.1 268.5 L842.5 267.7 L844 267.6 L845.4 267.6 L846.8 268 L848.4 214 L849.2 211 L850.5 211.2 L851.8 211.4 L853.2 211.3 L854.5 210.9 L855.8 210.7 L857.1 210.5 L858.5 211.2 L859.8 211.1 L861.1 210.8 L862.4 211.2 L863.8 211 L863.8 268 L865.1 267.9 L866.5 268.5 L867.9 268.3 L869.2 267.7 L870.6 268.4 L872 267.5 L873.3 268 L874.7 267.9 L876.1 267.7 L877.4 267.5 L878.8 268 L880.4 214 L881.2 211 L882.6 211.3 L884 210.5 L885.4 211.1 L886.8 211.5 L888.2 210.6 L889.6 210.7 L891 211.1 L892.4 211 L893.8 211 L893.8 268 L895.1 268.2 L896.5 268.3 L897.9 267.6 L899.2 267.8 L900.6 267.8 L902 267.5 L903.3 268.4 L904.7 268.3 L906.1 268.2 L907.4 267.5 L908.8 268 L910.4 214 L911.2 211 L912.6 211.4 L914 211.3 L915.3 211 L916.7 211.3 L918.1 210.9 L919.5 210.7 L920.9 210.6 L922.2 210.7 L923.6 210.5 L925 211 L925 268 L926.4 267.8 L927.8 268.3 L929.1 268.2 L930.5 268.4 L931.9 268.2 L933.3 267.7 L934.7 268.1 L936 267.9 L937.4 268.3 L938.8 268 L940.4 214 L941.2 211 L942.6 211 L944 210.7 L945.4 211.2 L946.8 211.5 L948.2 210.7 L949.6 211.4 L951 210.5 L952.4 210.7 L953.8 211 L953.8 268 L955.1 267.7 L956.5 268.3 L957.9 268.5 L959.2 268.3 L960.6 267.8 L962 268.4 L963.3 267.8 L964.7 267.7 L966.1 268.4 L967.4 268.1 L968.8 268 L970.4 214 L971.2 211 L972.6 211.2 L973.9 211.2 L975.3 211.5 L976.6 211 L978 211" fill="none" stroke="#4646f6" stroke-width="1.1"/>
<path d="M29 344.5 L30.3 344.8 L31.6 344.7 L32.9 344.9 L34.2 344.4 L35.5 344.7 L36.8 344.6 L38.1 344.3 L39.4 344.2 L40.7 344.6 L42 344.1 L43.3 344.9 L44.6 344.1 L45.9 344 L47.2 344.1 L48.5 344.9 L49.8 344.3 L51.1 344.1 L52.4 344 L53.7 344 L55 344.7 L56.3 344.6 L57.6 344.7 L58.9 344.7 L60.2 344.1 L61.5 344.6 L62.8 344.4 L64.1 344.8 L65.4 344.8 L66.7 344.9 L68 344.1 L69.3 344.9 L70.6 344.9 L71.9 344.9 L73.3 344.1 L74.6 344.2 L75.9 344.1 L77.2 344 L78.5 344.8 L79.8 344.8 L81.1 344.6 L82.4 344.8 L83.7 344.6 L85 344.3 L86.3 344.1 L87.6 344.1 L88.9 344.8 L90.2 344.2 L91.5 344.3 L92.8 344.4 L94.1 344 L95.4 344.3 L96.7 344.3 L98 344.7 L99.3 344.4 L100.6 344.3 L101.9 345 L103.2 344.5 L104.5 344.9 L105.8 344.6 L107.1 344 L108.4 344.4 L109.7 344.4 L111 344.8 L112.3 344.3 L113.6 344.7 L114.9 344.5 L116.2 344.2 L117.5 344.9 L118.8 344.1 L120.1 344.8 L121.4 344.2 L122.7 344 L124 344.2 L125.3 344.8 L126.6 345 L127.9 344 L129.2 344.5 L130.5 344.5 L131.8 344.8 L133.1 344.2 L134.4 344.5 L135.7 344.3 L137 344.8 L138.3 344.3 L139.6 344.9 L140.9 344.3 L142.2 344.2 L143.5 344.7 L144.8 344.5 L146.1 344.1 L147.4 344.6 L148.7 344.1 L150 344.8 L151.3 344.7 L152.6 344.8 L153.9 344.6 L155.2 344.4 L156.5 344.4 L157.8 344.4 L159.2 344.9 L160.5 344.1 L161.8 344.9 L163.1 344 L164.4 344.2 L165.7 344.3 L167 344.9 L168.3 344.5 L169.6 344.4 L170.9 344.9 L172.2 344.2 L173.5 344.5 L174.8 344.5 L176.1 344.8 L177.4 344.8 L178.7 344.6 L180 344.3 L181.3 344.3 L182.6 344.2 L183.9 344.8 L185.2 344.7 L186.5 344.7 L187.8 344.2 L189.1 344.4 L190.4 344.8 L191.7 344.6 L193 344.1 L194.3 344.5 L195.6 344.9 L196.9 344.2 L198.2 344.2 L199.5 344.3 L200.8 344.7 L202.1 344.8 L203.4 344.2 L204.7 344.2 L206 344.2 L207.3 344.3 L208.6 344.5 L209.9 344.2 L211.2 344.3 L212.5 344.2 L213.8 345 L215.1 344.7 L216.4 344.1 L217.7 345 L219 344.1 L220.3 344.4 L221.6 345 L222.9 344.8 L224.2 344.7 L225.5 344.4 L226.8 344.2 L228.1 344.6 L229.4 344.1 L230.7 344.2 L232 344.4 L233.3 344 L234.6 344.4 L235.9 344.8 L237.2 344.7 L238.5 344.5 L239.8 344.6 L241.1 344.5 L242.4 344.1 L243.7 344.6 L245.1 344.4 L246.4 344.7 L247.7 344.9 L249 344.4 L250.3 344.6 L251.6 344.7 L252.9 344.4 L254.2 344.2 L255.5 344.7 L256.8 344.9 L258.1 344.8 L259.4 344.7 L260.7 344.9 L262 344.7 L263.3 344.6 L264.6 344.5 L265.9 344.3 L267.2 344.6 L268.5 344.1 L269.8 344.4 L271.1 344.8 L272.4 344.7 L273.7 344.6 L275 344.3 L276.3 344.4 L277.6 344.5 L278.9 344.6 L280.2 344.4 L281.5 344.7 L282.8 344.9 L284.1 344.2 L285.4 344.7 L286.7 344.8 L288 344.4 L289.3 344.5 L290.6 345 L291.9 344 L293.2 344.5 L294.5 344.2 L295.8 344.8 L297.1 344.9 L298.4 344.5 L299.7 344.1 L301 344.6 L302.3 344.5 L303.6 344.7 L304.9 344.5 L306.2 344.6 L307.5 344.8 L308.8 344.5 L310.1 344.4 L311.4 344.9 L312.7 344.2 L314 344.7 L315.3 344.4 L316.6 344.8 L317.9 344.1 L319.2 345 L320.5 344.4 L321.8 344.1 L323.1 344.3 L324.4 344.4 L325.7 344 L327 344.4 L328.3 344.4 L329.6 344.7 L331 344.4 L332.3 344.3 L333.6 344.2 L334.9 344.7 L336.2 344.9 L337.5 344.5 L338.8 344.2 L340.1 344.8 L341.4 344.4 L342.7 344.2 L344 344.1 L345.3 344.8 L346.6 344.8 L347.9 344.6 L349.2 344.5 L350.5 344.6 L351.8 344.2 L353.1 345 L354.4 344.4 L355.7 344.6 L357 344.8 L358.3 344.8 L359.6 344.5 L360.9 344.3 L362.2 344.5 L363.5 344.1 L364.8 344.8 L366.1 344.4 L367.4 344.9 L368.7 344.3 L370 344.4 L371.3 344.3 L372.6 344.4 L373.9 344.2 L375.2 344 L376.5 344.7 L377.8 344.3 L379.1 344.2 L380.4 344.3 L381.7 344.5 L383 344.4 L384.3 344.6 L385.6 344.7 L386.9 344.4 L388.2 344.9 L389.5 344.9 L390.8 344.1 L392.1 344.8 L393.4 344.9 L394.7 344.8 L396 344.1 L397.3 344.8 L398.6 344.6 L399.9 344 L401.2 344 L402.5 345 L403.8 344.7 L405.1 344.3 L406.4 344.1 L407.7 344.1 L409 344.2 L410.3 344.8 L411.6 344.3 L412.9 344.2 L414.2 344.9 L415.5 344.8 L416.8 344.2 L418.2 344.9 L419.5 344.6 L420.8 344.8 L422.1 344.7 L423.4 344.9 L424.7 344.8 L426 344.8 L427.3 344.2 L428.6 344.7 L429.9 344.5 L431.2 344.7 L432.5 344.4 L433.8 344.9 L435.1 344.6 L436.4 344.3 L437.7 344.2 L439 344.1 L440.3 344.5 L441.6 344.1 L442.9 344.5 L444.2 344.1 L445.5 344.5 L446.8 344.5 L448.1 344.5 L449.4 344.9 L450.7 344 L452 344.8 L453.3 344.5 L454.6 344.6 L455.9 344.7 L457.2 344.8 L458.5 344.4 L459.8 344.4 L461.1 345 L462.4 344.1 L463.7 344.6 L465 344.6 L466.3 344 L467.6 344.6 L468.9 344.7 L470.2 344.9 L471.5 344.3 L472.8 345 L474.1 344.5 L475.4 344.5 L476.7 344.9 L478 344 L479.3 344.7 L480.6 344.6 L481.9 344.3 L483.2 344.9 L484.5 344.4 L485.8 344.5 L487.1 344.5 L488.4 344.8 L489.7 344.2 L491 344.4 L492.3 344.4 L493.6 344.6 L494.9 344.8 L496.2 344.3 L497.5 344.8 L498.8 344.4 L500.1 344.5 L501.4 344.3 L502.7 344.5 L504.1 345 L505.4 344.7 L506.7 344.8 L508 344.3 L509.3 344.3 L510.6 344.3 L511.9 344.6 L513.2 344.6 L514.5 344.8 L515.8 344 L517.1 344.7 L518.4 344.9 L519.7 344.5 L521 344 L522.3 344.3 L523.6 344 L524.9 344.2 L526.2 344.9 L527.5 344.6 L528.8 344.7 L530.1 344.8 L531.4 344.9 L532.7 344.6 L534 344.6 L535.3 344.6 L536.6 344.7 L537.9 344.6 L539.2 344.7 L540.5 344.2 L541.8 344.7 L543.1 344.5 L544.4 344.8 L545.7 344.1 L547 344.2 L548.3 344 L549.6 344.8 L550.9 344.9 L552.2 344.7 L553.5 344.4 L554.8 344.8 L556.1 344.8 L557.4 344.6 L558.7 344.3 L560 344.3 L561.3 344.4 L562.6 344.3 L563.9 344.4 L565.2 344.6 L566.5 344.9 L567.8 344.1 L569.1 344.6 L570.4 344 L571.7 344.1 L573 344.8 L574.3 344.6 L575.6 344.9 L576.9 344.4 L578.2 344 L579.5 344.4 L580.8 344.6 L582.1 344.9 L583.4 345 L584.7 344.5 L586 344.4 L587.3 344.1 L588.6 344.6 L590 344.2 L591.3 344.2 L592.6 344 L593.9 344 L595.2 344.7 L596.5 344.1 L597.8 345 L599.1 344.1 L600.4 344.9 L601.7 344.1 L603 344 L604.3 344.7 L605.6 344.2 L606.9 344.7 L608.2 344.2 L609.5 344.1 L610.8 344.8 L612.1 344.7 L613.4 344.9 L614.7 344.7 L616 344.1 L617.3 344.6 L618.6 344.7 L619.9 344.5 L621.2 344.9 L622.5 344.3 L623.8 345 L625.1 344.7 L626.4 344 L627.7 344 L629 344.7 L630.3 344.8 L631.6 344.1 L632.9 344.3 L634.2 344.7 L635.5 344.2 L636.8 344.9 L638.1 344.5 L639.4 344.1 L640.7 344.4 L642 344.6 L643.3 344.4 L644.6 344.7 L645.9 344.1 L647.2 344.8 L648.5 344.4 L649.8 344.6 L651.1 344.6 L652.4 344.4 L653.7 344.4 L655 344.8 L656.3 344.9 L657.6 344.8 L658.9 344.6 L660.2 344.3 L661.5 344.1 L662.8 345 L664.1 344.7 L665.4 344.8 L666.7 344.3 L668 344.6 L669.3 345 L670.6 344.8 L671.9 344.6 L673.2 344.3 L674.5 344.4 L675.9 344.9 L677.2 344.4 L678.5 344.7 L679.8 344.6 L681.1 344.9 L682.4 344.8 L683.7 344.3 L685 344 L686.3 344.3 L687.6 344.4 L688.9 344.6 L690.2 344.8 L691.5 344.9 L692.8 344 L694.1 344.8 L695.4 344.8 L696.7 344.9 L698 344.6 L699.3 344.3 L700.6 344.9 L701.9 344.8 L703.2 344.7 L704.5 344.9 L705.8 344.3 L707.1 344.1 L708.4 344.6 L709.7 344.8 L711 344.2 L712.3 344.8 L713.6 344.9 L714.9 344.2 L716.2 344.6 L717.5 344.7 L718.8 344.5 L719.6 277 L720.9 277 L722.2 276.7 L723.5 276.8 L724.8 277.3 L726.1 277.3 L727.4 277 L728.7 276.6 L730 277.3 L731.3 277.3 L732.7 276.7 L734 277.1 L735.3 277.4 L736.6 277.4 L737.9 277 L739.2 277 L740.5 277.1 L741.8 276.7 L743.1 276.7 L744.4 276.7 L745.7 277.2 L747 276.9 L748.3 277.1 L749.6 276.9 L750.9 277 L752.2 276.6 L753.5 276.5 L754.8 277.5 L756.1 276.9 L757.4 276.6 L758.8 277.1 L760.1 277.3 L761.4 276.7 L762.7 277.1 L764 276.8 L765.3 277 L766.6 276.5 L767.9 276.5 L769.2 277.5 L770.5 277.4 L771.8 277 L773.1 277.1 L774.4 276.8 L775.7 277.3 L777 276.9 L778.3 277.4 L779.6 277.3 L780.9 277.3 L782.2 277.5 L783.5 276.8 L784.9 276.5 L786.2 276.7 L787.5 276.7 L788.8 276.6 L790.1 276.6 L791.4 277.1 L792.7 277.4 L794 277 L795.3 277.4 L796.6 277.4 L797.9 276.6 L799.2 277.1 L800.5 276.9 L801.8 276.6 L803.1 277.5 L804.4 276.8 L805.7 277.1 L807 277.1 L808.3 277.5 L809.6 277.2 L811 276.9 L812.3 276.9 L813.6 276.7 L814.9 277.5 L816.2 277.5 L817.5 276.7 L818.8 276.5 L820.1 276.8 L821.4 276.9 L822.7 277.4 L824 277.4 L825.3 277.3 L826.6 276.5 L827.9 277.3 L829.2 277.2 L830.5 277.1 L831.8 277.5 L833.1 276.6 L834.4 276.6 L835.7 277.3 L837.1 277.4 L838.4 277.2 L839.7 276.8 L841 277.1 L842.3 277.3 L843.6 276.6 L844.9 276.8 L846.2 276.8 L847.5 276.6 L848.8 277 L850.1 276.7 L851.4 276.7 L852.7 276.6 L854 277.2 L855.3 276.5 L856.6 277.2 L857.9 276.7 L859.2 276.5 L860.5 277.4 L861.9 276.7 L863.2 277.4 L864.5 277.4 L865.8 277.4 L867.1 276.6 L868.4 276.9 L869.7 276.6 L871 277.4 L872.3 277.3 L873.6 277.1 L874.9 277 L876.2 276.8 L877.5 277.3 L878.8 277 L880.1 277.1 L881.4 276.6 L882.7 276.7 L884 276.6 L885.3 277.2 L886.6 277.1 L888 276.6 L889.3 277.4 L890.6 276.8 L891.9 276.9 L893.2 276.7 L894.5 276.8 L895.8 277.3 L897.1 276.8 L898.4 276.7 L899.7 277 L901 276.8 L902.3 277.4 L903.6 276.6 L904.9 277.5 L906.2 276.6 L907.5 277.4 L908.8 277.2 L910.1 276.7 L911.4 277 L912.7 276.8 L914.1 276.8 L915.4 276.7 L916.7 276.9 L918 277.5 L919.3 277.5 L920.6 277.4 L921.9 276.6 L923.2 276.8 L924.5 277.4 L925.8 276.6 L927.1 277.2 L928.4 276.8 L929.7 277.5 L931 276.5 L932.3 277.3 L933.6 276.8 L934.9 276.6 L936.2 276.5 L937.5 277.3 L938.8 277 L940.2 276.7 L941.5 276.9 L942.8 277.4 L944.1 276.7 L945.4 277.1 L946.7 276.6 L948 276.7 L949.3 277.3 L950.6 277.2 L951.9 276.7 L953.2 276.6 L954.5 276.6 L955.8 277.1 L957.1 277 L958.4 276.8 L959.7 276.7 L961 277.1 L962.3 277.2 L963.6 277.3 L964.9 277.1 L966.3 276.7 L967.6 276.6 L968.9 277.2 L970.2 276.9 L971.5 277.2 L972.8 276.6 L974.1 277.3 L975.4 276.8 L976.7 277.3 L978 277" fill="none" stroke="#38a038" stroke-width="1.15"/>
<path d="M29 389.4 L30.4 389 L31.8 388.4 L33.2 389.5 L34.6 389 L36 389.4 L37.4 388.7 L38.8 388.6 L40.2 389.4 L41.6 388.8 L43 388.6 L44.4 388.8 L45.8 389.1 L47.2 388.4 L48.6 389 L50 388.9 L51.4 389 L52.8 388.5 L54.2 389.3 L55.6 389.4 L57 389.4 L58.4 388.8 L59.8 389.3 L61.2 388.9 L62.6 389.3 L64 388.5 L65.4 389.4 L66.8 389.5 L68.2 389 L69.6 389 L71 389 L72.4 389 L73.8 388.4 L75.2 389.6 L76.6 388.7 L78 388.6 L79.4 388.5 L80.8 388.7 L82.2 389.4 L83.6 388.4 L85 388.5 L86.4 389.2 L87.8 388.6 L89.2 388.4 L90.6 389.1 L92 389.1 L93.4 389 L94.8 389.2 L96.2 388.5 L97.6 389.4 L99 389.3 L100.4 388.5 L101.8 388.5 L103.2 389 L104.6 389 L106 388.7 L107.4 388.5 L108.8 388.9 L110.2 388.6 L111.6 389.1 L113 389.4 L114.4 388.6 L115.8 389.1 L117.2 389.3 L118.6 388.6 L120 389.4 L121.4 389.5 L122.8 388.9 L124.2 388.9 L125.6 389.4 L127 389 L128.4 388.9 L129.8 389.5 L131.2 389.3 L132.6 388.8 L134 388.7 L135.4 388.8 L136.8 388.9 L138.2 389.6 L139.6 389.4 L141 389.5 L142.4 389.4 L143.8 389.4 L145.2 388.5 L146.6 389 L148 389.5 L149.4 389.5 L150.8 388.7 L152.2 388.9 L153.6 389.2 L155 388.8 L156.4 389 L157.8 388.5 L159.2 388.9 L160.6 389 L162 388.4 L163.4 388.6 L164.8 389.6 L166.2 389.3 L167.6 389.5 L169 389.2 L170.4 389.4 L171.8 389.5 L173.2 389.5 L174.6 388.4 L176 389.2 L177.4 388.7 L178.8 389.2 L180.2 388.7 L181.6 389.1 L183 389.5 L184.4 389.1 L185.8 388.7 L187.2 389 L188.6 388.9 L190 389.5 L191.4 388.7 L192.8 388.8 L194.2 389.2 L195.6 388.5 L197 389.1 L198.4 389.5 L199.8 389 L201.2 388.7 L202.6 389 L204 389 L205.4 388.6 L206.8 388.5 L208.2 388.6 L209.6 388.8 L211 388.9 L212.4 388.7 L213.8 388.7 L215.2 388.5 L216.6 389.1 L218 389.4 L219.4 389.1 L220.8 389.1 L222.2 389.2 L223.6 388.6 L225 389.3 L226.4 389 L227.8 389.1 L229.2 389.1 L230.6 389 L232 388.8 L233.4 388.7 L234.8 388.7 L236.2 389 L237.6 388.9 L239 389.1 L240.4 388.4 L241.8 388.8 L243.2 389.4 L244.6 388.7 L246 389.1 L247.4 389 L248.8 388.7 L250.2 389.6 L251.6 388.8 L253 389.3 L254.4 388.6 L255.8 388.5 L257.2 389.4 L258.6 388.9 L260 388.5 L261.4 388.9 L262.8 388.9 L264.2 389.3 L265.6 388.5 L267 388.7 L268.4 389.6 L269.8 389.3 L271.2 388.6 L272.6 388.8 L274 388.8 L275.4 389.2 L276.8 389.1 L278.2 389.4 L279.6 389.4 L281 389 L282.4 389.3 L283.8 389.3 L285.2 389.3 L286.6 389 L288 389.3 L289.4 389.3 L290.8 389.5 L292.2 388.6 L293.6 389.4 L295 388.4 L296.4 389.3 L297.8 389.1 L299.2 389 L300.6 389.6 L302 389.1 L303.4 388.9 L304.8 389.3 L306.2 389.4 L307.6 389.1 L309 388.9 L310.4 388.9 L311.8 388.9 L313.2 389.3 L314.6 388.8 L316 388.9 L317.4 389.1 L318.8 388.9 L320.2 388.8 L321.6 389.3 L323 389.4 L324.4 389 L325.8 388.9 L327.2 388.6 L328.6 388.8 L330 388.6 L331.4 389.1 L332.8 389.1 L334.2 388.5 L335.6 389.5 L337 388.8 L338.4 389.4 L339.8 389.4 L341.2 389.6 L342.6 388.6 L344 388.9 L345.4 389.5 L346.8 388.4 L348.2 388.5 L349.6 389.1 L351 389 L352.4 389.5 L353.8 389.3 L355.2 389 L356.6 389.6 L358 389 L359.4 389 L360.8 389.2 L362.2 388.9 L363.6 388.8 L365 389.1 L366.4 388.8 L367.8 389.5 L369.2 389.2 L370.6 389 L372 388.5 L373.4 388.8 L374.8 388.9 L376.2 389.1 L377.6 389.1 L379 389.5 L380.4 389.6 L381.8 389 L383.2 388.9 L384.6 389.1 L386 389.6 L387.4 388.8 L388.8 389 L390.2 389.4 L391.6 388.6 L393 388.8 L394.4 389.6 L395.8 389.4 L397.2 389 L398.6 388.5 L400 389.5 L401.4 389.2 L402.8 389.4 L404.2 389.6 L405.6 389.5 L407 388.9 L408.4 388.6 L409.8 388.7 L411.2 389 L412.6 389 L414 388.6 L415.4 388.6 L416.8 389.2 L418.2 389.1 L419.6 388.8 L421 389.6 L422.4 389.2 L423.8 388.5 L425.2 388.9 L426.6 389.3 L428 388.8 L429.4 389.2 L430.8 388.4 L432.2 388.8 L433.6 389.4 L435 389.1 L436.4 389.2 L437.8 388.6 L439.2 389 L440.6 389.1 L442 388.7 L443.4 389.2 L444.8 389 L446.2 389.6 L447.6 389.1 L449 388.9 L450.4 388.5 L451.8 388.6 L453.2 389.3 L454.6 388.5 L456 388.5 L457.4 388.6 L458.8 389 L460.2 389.4 L461.6 389.1 L463 389.4 L464.4 388.5 L465.8 388.4 L467.2 389.3 L468.6 388.8 L470 389.3 L471.4 388.8 L472.8 388.6 L474.2 388.7 L475.6 388.5 L477 389.5 L478.4 389.1 L479.8 388.8 L481.2 388.9 L482.6 388.9 L484 388.5 L485.4 389.5 L486.8 389.1 L488.2 389.6 L489.6 388.9 L491 389.1 L492.4 388.7 L493.8 388.5 L495.2 389.5 L496.6 389.4 L498 388.8 L499.4 389.5 L500.8 389.4 L502.2 388.8 L503.6 389.1 L505 389.6 L506.4 389 L507.8 389.5 L509.2 388.7 L510.6 388.9 L512 389.3 L513.4 388.7 L514.8 388.8 L516.2 389.5 L517.6 389 L519 389.4 L520.4 388.7 L521.8 388.6 L523.2 388.8 L524.6 388.6 L526 389.6 L527.4 388.7 L528.8 389.1 L530.2 388.5 L531.6 389 L533 388.9 L534.4 388.9 L535.8 388.5 L537.2 388.5 L538.6 389.4 L540 388.8 L541.4 388.7 L542.8 388.6 L544.2 388.7 L545.6 388.7 L547 388.4 L548.4 389.2 L549.8 388.8 L551.2 388.6 L552.6 389.2 L554 388.5 L555.4 388.7 L556.8 389.4 L558.2 388.6 L559.6 388.9 L561 389.4 L562.4 389.4 L563.8 388.6 L565.2 388.8 L566.6 389.3 L568 388.9 L569.4 389.6 L570.8 388.6 L572.2 389.5 L573.6 389 L575 388.7 L576.4 388.9 L577.8 388.6 L579.2 389.2 L580.6 388.7 L582 389.5 L583.4 389.1 L584.8 388.8 L586.2 388.7 L587.6 389.1 L589 388.7 L590.4 389.4 L591.8 388.5 L593.2 389 L594.6 389.1 L596 388.7 L597.4 389.3 L598.8 388.9 L600.2 389.2 L601.6 389.1 L603 388.8 L604.4 388.9 L605.8 388.5 L607.2 388.6 L608.6 389.4 L610 388.8 L611.4 389.2 L612.8 388.5 L614.2 389.1 L615.6 388.8 L617 389 L618.4 388.8 L619.8 388.5 L621.2 388.8 L622.6 388.7 L624 388.6 L625.4 389.3 L626.8 388.7 L628.2 388.9 L629.6 389.5 L631 389.3 L632.4 389.5 L633.8 389.4 L635.2 388.6 L636.6 388.7 L638 388.4 L639.4 389.2 L640.8 389.2 L642.2 388.8 L643.6 388.9 L645 389.2 L646.4 389.2 L647.8 388.7 L649.2 389.4 L650.6 388.8 L652 389.2 L653.4 388.6 L654.8 388.5 L656.2 389.5 L657.6 389.3 L659 389.3 L660.4 388.4 L661.8 388.4 L663.2 388.6 L664.6 388.6 L666 388.8 L667.4 388.9 L668.8 388.4 L670.2 388.8 L671.6 389.2 L673 388.6 L674.4 389.4 L675.8 389.1 L677.2 389.3 L678.6 388.7 L680 388.9 L681.4 389.2 L682.8 388.8 L684.2 388.4 L685.6 389.4 L687 389.3 L688.4 388.7 L689.8 388.5 L691.2 389.4 L692.6 389.1 L694 388.5 L695.4 388.7 L696.8 388.5 L698.2 389.3 L699.6 388.7 L701 389.5 L702.4 389.3 L703.8 388.5 L705.2 389.2 L706.6 388.9 L708 389.3 L709.4 389.4 L710.8 388.7 L712.2 388.5 L713.6 389.5 L715 388.9 L716.4 389.5 L717.8 389.2 L719.2 389.3 L720.6 389.4 L722 389.2 L723.4 388.9 L724.8 388.5 L726.2 389.2 L727.6 388.9 L729 389 L730.4 389.5 L731.8 388.6 L733.2 389.3 L734.6 388.5 L736 389.2 L737.4 389.4 L738.8 388.7 L740.2 389.1 L741.6 389.6 L743 389.2 L744.5 389 L745.5 400.5 L747 400.9 L748.5 400.9 L750 401.5 L751.4 401.2 L752.9 401.6 L754.3 401.8 L755.7 401.8 L757.1 402 L758.6 402 L760 402.5 L761.4 402.6 L762.9 402.5 L764.3 402 L765.7 402 L767.1 402.2 L768.6 402 L770 402 L771.7 402.3 L773.3 401.5 L775 401.5 L776.4 402.5 L777.7 404.3 L779 404.8 L780.4 406.4 L781.9 405 L783.5 403.3 L785 402 L786.7 401 L788.3 399.4 L790 398 L791.7 397.4 L793.3 396 L795 395.5 L796.6 394.4 L798.2 393 L798.3 238.2 L799 238.5 L799.5 330 L799.8 355 L800.3 344 L801 352 L802.5 365 L805 370 L806.7 370.9 L808.3 371.6 L810 372.5 L811.7 373.1 L813.3 373.5 L815 373.5 L816.7 373.6 L818.3 374.3 L820 375 L821.7 375.4 L823.3 375.7 L825 376.5 L826.5 376.1 L828 376.3 L829.5 376.2 L831 376.5 L831.6 358 L832.5 372 L833.9 402 L835.6 377.5 L837 393.8 L839.5 382.7 L841 391 L843 385 L845 390 L847 388 L849 389.2 L850.4 388.9 L851.8 388.5 L853.2 388.8 L854.6 389 L856 388.8 L857.4 388.6 L858.8 388.5 L860.2 388.4 L861.6 389.6 L863 389.3 L864.4 388.5 L865.8 389.3 L867.2 389.6 L868.6 389.1 L870 388.5 L871.4 389 L872.8 388.9 L874.2 388.6 L875.6 389.1 L877 388.4 L878.4 389.5 L879.8 389.2 L881.2 389.2 L882.6 389.5 L884 389.2 L885.4 388.7 L886.8 388.7 L888.2 388.6 L889.6 388.4 L891 389.3 L892.4 389.4 L893.8 388.8 L895.2 388.6 L896.6 389.2 L898 389.4 L899.4 389.5 L900.8 388.6 L902.2 389.3 L903.6 389.4 L905 389.3 L906.4 388.8 L907.8 388.6 L909.2 389.4 L910.6 388.8 L912 388.8 L913.4 389.1 L914.8 388.8 L916.2 389.4 L917.6 388.7 L919 388.4 L920.4 389.1 L921.8 389.2 L923.2 389.4 L924.6 389.2 L926 389.5 L927.4 389.5 L928.8 389 L930.2 389 L931.6 388.6 L933 388.8 L934.4 389.1 L935.8 388.5 L937.2 389.2 L938.6 388.6 L940 388.9 L941.4 389.6 L942.8 388.5 L944.2 388.4 L945.6 388.9 L947 388.6 L948.4 389.3 L949.8 388.4 L951.2 389.4 L952.6 389.4 L954 389.3 L955.4 388.9 L956.8 388.7 L958.2 389.2 L959.6 389 L961 388.9 L962.4 388.8 L963.8 388.9 L965.2 389.2 L966.6 389.4 L968 389.5 L969.4 388.6 L970.8 388.8 L972.2 388.9 L973.6 389.1 L975 388.8 L976.4 388.6 L977.8 388.5" fill="none" stroke="#a43232" stroke-width="1.1"/>
<rect x="36" y="97.5" width="49.5" height="9" fill="#eeeeff" stroke="#6a6af8" stroke-width="1.05"/>
<text x="37.8" y="104.9" font-family="Liberation Sans" font-size="8.4" fill="#2a2ae0" textLength="47.5" lengthAdjust="spacingAndGlyphs">2 ДПКВ 60-2</text>
<rect x="904" y="161" width="57.5" height="9.3" fill="#ffffff" stroke="#f03030" stroke-width="1.05"/>
<text x="905.8" y="168.7" font-family="Liberation Sans" font-size="8.4" fill="#e83030" textLength="51.5" lengthAdjust="spacingAndGlyphs">1 ДПРВ впуск</text>
<rect x="42.5" y="294.2" width="53" height="8.3" fill="#ffffff" stroke="#30a030" stroke-width="1.05"/>
<text x="44.3" y="300.9" font-family="Liberation Sans" font-size="8.0" fill="#309030" textLength="51" lengthAdjust="spacingAndGlyphs">3 ДПРВ выпус</text>
<rect x="38" y="396.5" width="45.5" height="9.2" fill="#ffffff" stroke="#a84040" stroke-width="1.05"/>
<text x="39.8" y="404.1" font-family="Liberation Sans" font-size="8.4" fill="#a03c3c" textLength="41" lengthAdjust="spacingAndGlyphs">4 Cx 1 цил.</text>
<rect x="800.5" y="189" width="185" height="28" fill="#ffffff"/>
<g font-family="Liberation Sans" font-size="13" clip-path="url(#pc)"><text x="801.8" y="201" stroke-width="0.35"><tspan fill="#862086" stroke="#862086">T1=406.098 мс </tspan><tspan fill="#881818" stroke="#881818">ΔT=52.779 мс</tspan></text><text x="801.8" y="215.5" stroke-width="0.35"><tspan fill="#208620" stroke="#208620">T2=458.876 мс </tspan><tspan fill="#202088" stroke="#202088">RPM=2274 об/мин</tspan></text></g>
<line x1="26" y1="96" x2="26" y2="491" stroke="#c890d0" stroke-width="2"/>
<line x1="978.3" y1="96" x2="978.3" y2="491" stroke="#60b060" stroke-width="1.6"/>
<polygon points="20.5,89 31.5,89 26,95" fill="#8a1a9a"/>
<polygon points="973,89 984,89 978.5,94.5" fill="#1e8a1e"/>
<text x="26" y="93.6" text-anchor="middle" font-family="Liberation Sans" font-size="4.5" fill="#f0d8f0">1</text>
<text x="978.5" y="93.3" text-anchor="middle" font-family="Liberation Sans" font-size="4.5" fill="#d8f0d8">2</text>
<rect x="21.5" y="95" width="6" height="3" fill="#8a1414"/>
<rect x="974" y="95" width="7" height="3" fill="#d81010"/>
<circle cx="29" cy="268" r="2.6" fill="#1a1ad0"/>
<polygon points="21,264.5 21,271.5 26,268" fill="#1a1ad0"/>
<circle cx="29" cy="343.4" r="2.8" fill="#1f8a1f"/>
<circle cx="29" cy="382.2" r="2.7" fill="#8a1414"/>
<polygon points="21,289 21,297 25.6,293" fill="#8a1414"/>
<polygon points="21,437 21,441.8 25.6,441.5" fill="#1a1ad0"/>
<polygon points="20.5,487 20.5,491.5 25,491.5" fill="#8a1414"/>
<circle cx="974.6" cy="202.6" r="2.6" fill="#d81010"/>
<polygon points="985,262 985,268 980,265" fill="#8a1414"/>
<polygon points="985,428 985,434 980,434" fill="#b01414"/>
<rect x="0" y="66" width="1000" height="21" fill="#fcfcfc"/>
<path d="M7.5 72.5 H13.5 L16 75 V81.5 H7.5 Z" fill="#fff" stroke="#8fa3c4" stroke-width="1"/><path d="M13.5 72.5 V75 H16" fill="none" stroke="#8fa3c4" stroke-width="1"/>
<path d="M23.5 74 H27 L28 75 H32 V81.5 H23.5 Z" fill="#e8c060" stroke="#b08a30" stroke-width="0.8"/>
<path d="M25 77 H35.2 L32.5 81.8 H23.5 Z" fill="#f4c838" stroke="#b88a20" stroke-width="0.8"/>
<path d="M30 72.5 Q32 71 34 72.8" fill="none" stroke="#7090c0" stroke-width="1"/><circle cx="34" cy="73.5" r="1" fill="#5078b0"/>
<rect x="41.5" y="72" width="11" height="10" rx="0.8" fill="#4848c8"/>
<rect x="41.5" y="72" width="2.5" height="10" fill="#7a7ae0" opacity="0.7"/>
<rect x="44" y="73" width="6" height="4.2" fill="#f4f8ff"/>
<rect x="44.5" y="78.8" width="3.5" height="3.2" fill="#202040"/>
<rect x="45.5" y="79.5" width="1.2" height="2" fill="#c8c8d8"/>
<rect x="59.2" y="72" width="11" height="10" rx="0.8" fill="#4848c8"/>
<rect x="59.2" y="72" width="2.5" height="10" fill="#7a7ae0" opacity="0.7"/>
<rect x="61.7" y="73" width="6" height="4.2" fill="#f4f8ff"/>
<rect x="62.2" y="78.8" width="3.5" height="3.2" fill="#202040"/>
<rect x="63.2" y="79.5" width="1.2" height="2" fill="#c8c8d8"/>
<rect x="65.8" y="78.2" width="4.4" height="4.2" fill="#e04a18"/>
<rect x="77.5" y="72.5" width="8" height="8.5" fill="#dff6f6" stroke="#708080" stroke-width="0.8" stroke-dasharray="1 1"/>
<rect x="80.3" y="75.2" width="7.5" height="7.2" rx="0.6" fill="#6a6a6a"/><rect x="81.8" y="76" width="4.5" height="2.5" fill="#f0f0f0"/><rect x="82.3" y="80" width="3" height="2.4" fill="#a8a8a8"/>
<line x1="93.3" y1="69" x2="93.3" y2="86" stroke="#c4c4c4" stroke-width="1"/><line x1="94.3" y1="69" x2="94.3" y2="86" stroke="#ffffff" stroke-width="1"/>
<path d="M100 72.2 L100.5 72.9 L101 73.4 L101.4 73.3 L101.9 72.8 L102.4 72 L102.9 71.4 L103.4 71 L103.8 71.2 L104.3 71.7 L104.8 72.5 L105.3 73.2 L105.8 73.4 L106.2 73.2 L106.7 72.5 L107.2 71.7 L107.7 71.2 L108.1 71 L108.6 71.4 L109.1 72 L109.6 72.8 L110.1 73.3 L110.5 73.4 L111 72.9 L111.5 72.2" fill="none" stroke="#f24848" stroke-width="1.3" opacity="0.85"/>
<path d="M100 74.8 L100.5 75.5 L101 76 L101.4 75.9 L101.9 75.4 L102.4 74.6 L102.9 74 L103.4 73.6 L103.8 73.8 L104.3 74.3 L104.8 75.1 L105.3 75.8 L105.8 76 L106.2 75.8 L106.7 75.1 L107.2 74.3 L107.7 73.8 L108.1 73.6 L108.6 74 L109.1 74.6 L109.6 75.4 L110.1 75.9 L110.5 76 L111 75.5 L111.5 74.8" fill="none" stroke="#4848f2" stroke-width="1.3" opacity="0.85"/>
<path d="M100 78 L100.5 78.7 L101 79.2 L101.4 79.1 L101.9 78.6 L102.4 77.8 L102.9 77.2 L103.4 76.8 L103.8 77 L104.3 77.5 L104.8 78.3 L105.3 79 L105.8 79.2 L106.2 79 L106.7 78.3 L107.2 77.5 L107.7 77 L108.1 76.8 L108.6 77.2 L109.1 77.8 L109.6 78.6 L110.1 79.1 L110.5 79.2 L111 78.7 L111.5 78" fill="none" stroke="#3a9a3a" stroke-width="1.3" opacity="0.85"/>
<path d="M100 81 L100.5 81.7 L101 82.2 L101.4 82.1 L101.9 81.6 L102.4 80.8 L102.9 80.2 L103.4 79.8 L103.8 80 L104.3 80.5 L104.8 81.3 L105.3 82 L105.8 82.2 L106.2 82 L106.7 81.3 L107.2 80.5 L107.7 80 L108.1 79.8 L108.6 80.2 L109.1 80.8 L109.6 81.6 L110.1 82.1 L110.5 82.2 L111 81.7 L111.5 81" fill="none" stroke="#a04848" stroke-width="1.3" opacity="0.85"/>
<path d="M116.8 76.8 L117.3 76.5 L117.8 76 L118.3 75.3 L118.8 74.4 L119.3 73.6 L119.8 72.8 L120.3 72.2 L120.8 71.7 L121.3 71.6 L121.8 71.7 L122.3 72.1 L122.8 72.8 L123.3 73.5 L123.8 74.4 L124.3 75.2 L124.8 75.9 L125.3 76.5 L125.8 76.8 L126.3 76.8 L126.8 76.5 L127.3 76 L127.8 75.3 L128.3 74.4 L128.8 73.6" fill="none" stroke="#4040f0" stroke-width="1.3" opacity="0.85"/>
<path d="M116.8 71.6 L117.3 71.9 L117.8 72.4 L118.3 73.1 L118.8 74 L119.3 74.8 L119.8 75.6 L120.3 76.2 L120.8 76.7 L121.3 76.8 L121.8 76.7 L122.3 76.3 L122.8 75.6 L123.3 74.9 L123.8 74 L124.3 73.2 L124.8 72.5 L125.3 71.9 L125.8 71.6 L126.3 71.6 L126.8 71.9 L127.3 72.4 L127.8 73.1 L128.3 74 L128.8 74.8" fill="none" stroke="#f04040" stroke-width="1.3" opacity="0.85"/>
<path d="M116.8 82.6 L117.3 82.3 L117.8 81.8 L118.3 81.1 L118.8 80.2 L119.3 79.4 L119.8 78.6 L120.3 78 L120.8 77.5 L121.3 77.4 L121.8 77.5 L122.3 77.9 L122.8 78.6 L123.3 79.3 L123.8 80.2 L124.3 81 L124.8 81.7 L125.3 82.3 L125.8 82.6 L126.3 82.6 L126.8 82.3 L127.3 81.8 L127.8 81.1 L128.3 80.2 L128.8 79.4" fill="none" stroke="#a04848" stroke-width="1.3" opacity="0.85"/>
<path d="M116.8 77.4 L117.3 77.7 L117.8 78.2 L118.3 78.9 L118.8 79.8 L119.3 80.6 L119.8 81.4 L120.3 82 L120.8 82.5 L121.3 82.6 L121.8 82.5 L122.3 82.1 L122.8 81.4 L123.3 80.7 L123.8 79.8 L124.3 79 L124.8 78.3 L125.3 77.7 L125.8 77.4 L126.3 77.4 L126.8 77.7 L127.3 78.2 L127.8 78.9 L128.3 79.8 L128.8 80.6" fill="none" stroke="#3a9a3a" stroke-width="1.3" opacity="0.85"/>
<path d="M135 76.8 L135.5 75.8 L136 74.9 L136.5 74.1 L137 73.5 L137.5 73.1 L138 73 L138.5 73.1 L139 73.5 L139.5 74.1 L140 74.9 L140.5 75.8 L141 76.8 L141.5 77.8 L142 78.7 L142.5 79.5 L143 80.1 L143.5 80.5 L144 80.6 L144.5 80.5 L145 80.1 L145.5 79.5 L146 78.7 L146.5 77.8 L147 76.8" fill="none" stroke="#f04848" stroke-width="1.3" opacity="0.85"/>
<path d="M135 76.8 L135.5 77.6 L136 78.3 L136.5 78.9 L137 79.4 L137.5 79.7 L138 79.8 L138.5 79.7 L139 79.4 L139.5 78.9 L140 78.3 L140.5 77.6 L141 76.8 L141.5 76 L142 75.3 L142.5 74.7 L143 74.2 L143.5 73.9 L144 73.8 L144.5 73.9 L145 74.2 L145.5 74.7 L146 75.3 L146.5 76 L147 76.8" fill="none" stroke="#4848f0" stroke-width="1.5" opacity="0.85"/>
<path d="M135 76.8 L135.5 77 L136 77.2 L136.5 77.4 L137 77.5 L137.5 77.6 L138 77.6 L138.5 77.6 L139 77.5 L139.5 77.4 L140 77.2 L140.5 77 L141 76.8 L141.5 76.6 L142 76.4 L142.5 76.2 L143 76.1 L143.5 76 L144 76 L144.5 76 L145 76.1 L145.5 76.2 L146 76.4 L146.5 76.6 L147 76.8" fill="none" stroke="#2e8a2e" stroke-width="1.3" opacity="0.85"/>
<path d="M153.2 72.2 L153.7 72.9 L154.2 73.4 L154.6 73.3 L155.1 72.8 L155.6 72 L156.1 71.4 L156.6 71 L157 71.2 L157.5 71.7 L158 72.5 L158.5 73.2 L158.9 73.4 L159.4 73.2 L159.9 72.5 L160.4 71.7 L160.9 71.2 L161.3 71 L161.8 71.4 L162.3 72 L162.8 72.8 L163.3 73.3 L163.7 73.4 L164.2 72.9 L164.7 72.2" fill="none" stroke="#f24848" stroke-width="1.3" opacity="0.85"/>
<path d="M153.2 74.8 L153.7 75.5 L154.2 76 L154.6 75.9 L155.1 75.4 L155.6 74.6 L156.1 74 L156.6 73.6 L157 73.8 L157.5 74.3 L158 75.1 L158.5 75.8 L158.9 76 L159.4 75.8 L159.9 75.1 L160.4 74.3 L160.9 73.8 L161.3 73.6 L161.8 74 L162.3 74.6 L162.8 75.4 L163.3 75.9 L163.7 76 L164.2 75.5 L164.7 74.8" fill="none" stroke="#4848f2" stroke-width="1.3" opacity="0.85"/>
<path d="M153.2 78 L153.4 78.3 L153.6 78.6 L153.8 78.9 L154 79.1 L154.2 79.2 L154.4 79.2 L154.7 79.1 L154.9 78.9 L155.1 78.7 L155.3 78.3 L155.5 78 L155.7 77.7 L155.9 77.4 L156.1 77.1 L156.3 76.9 L156.5 76.8 L156.7 76.8 L156.9 76.9 L157.2 77.1 L157.4 77.3 L157.6 77.6 L157.8 78 L158 78.3 L158.2 78.6" fill="none" stroke="#3a9a3a" stroke-width="1.3" opacity="0.85"/>
<path d="M153.2 81 L153.4 81.3 L153.6 81.6 L153.8 81.9 L154 82.1 L154.2 82.2 L154.4 82.2 L154.7 82.1 L154.9 81.9 L155.1 81.7 L155.3 81.3 L155.5 81 L155.7 80.7 L155.9 80.4 L156.1 80.1 L156.3 79.9 L156.5 79.8 L156.7 79.8 L156.9 79.9 L157.2 80.1 L157.4 80.3 L157.6 80.6 L157.8 81 L158 81.3 L158.2 81.6" fill="none" stroke="#a04848" stroke-width="1.3" opacity="0.85"/>
<circle cx="160.7" cy="79.3" r="3.7" fill="#22a022"/><circle cx="160.7" cy="78.5" r="2.4" fill="#40c040" opacity="0.6"/>
<path d="M158.9 79.2 L160.1 80.6 L162.5 77.6" fill="none" stroke="#fff" stroke-width="1"/>
<path d="M170.8 72.2 L171.3 72.9 L171.8 73.4 L172.2 73.3 L172.7 72.8 L173.2 72 L173.7 71.4 L174.2 71 L174.6 71.2 L175.1 71.7 L175.6 72.5 L176.1 73.2 L176.6 73.4 L177 73.2 L177.5 72.5 L178 71.7 L178.5 71.2 L178.9 71 L179.4 71.4 L179.9 72 L180.4 72.8 L180.9 73.3 L181.3 73.4 L181.8 72.9 L182.3 72.2" fill="none" stroke="#f24848" stroke-width="1.3" opacity="0.85"/>
<path d="M170.8 74.8 L171.3 75.5 L171.8 76 L172.2 75.9 L172.7 75.4 L173.2 74.6 L173.7 74 L174.2 73.6 L174.6 73.8 L175.1 74.3 L175.6 75.1 L176.1 75.8 L176.6 76 L177 75.8 L177.5 75.1 L178 74.3 L178.5 73.8 L178.9 73.6 L179.4 74 L179.9 74.6 L180.4 75.4 L180.9 75.9 L181.3 76 L181.8 75.5 L182.3 74.8" fill="none" stroke="#4848f2" stroke-width="1.3" opacity="0.85"/>
<path d="M170.8 78 L171 78.3 L171.2 78.6 L171.4 78.9 L171.6 79.1 L171.8 79.2 L172.1 79.2 L172.3 79.1 L172.5 78.9 L172.7 78.7 L172.9 78.3 L173.1 78 L173.3 77.7 L173.5 77.4 L173.7 77.1 L173.9 76.9 L174.1 76.8 L174.3 76.8 L174.6 76.9 L174.8 77.1 L175 77.3 L175.2 77.6 L175.4 78 L175.6 78.3 L175.8 78.6" fill="none" stroke="#3a9a3a" stroke-width="1.3" opacity="0.85"/>
<path d="M170.8 81 L171 81.3 L171.2 81.6 L171.4 81.9 L171.6 82.1 L171.8 82.2 L172.1 82.2 L172.3 82.1 L172.5 81.9 L172.7 81.7 L172.9 81.3 L173.1 81 L173.3 80.7 L173.5 80.4 L173.7 80.1 L173.9 79.9 L174.1 79.8 L174.3 79.8 L174.6 79.9 L174.8 80.1 L175 80.3 L175.2 80.6 L175.4 81 L175.6 81.3 L175.8 81.6" fill="none" stroke="#a04848" stroke-width="1.3" opacity="0.85"/>
<circle cx="178.3" cy="79.3" r="3.7" fill="#22a022"/><circle cx="178.3" cy="78.5" r="2.4" fill="#40c040" opacity="0.6"/>
<rect x="177.8" y="76.6" width="1" height="2.6" fill="#fff"/><rect x="177.8" y="80.2" width="1" height="1" fill="#fff"/>
<path d="M188.4 72.2 L188.9 72.9 L189.4 73.4 L189.8 73.3 L190.3 72.8 L190.8 72 L191.3 71.4 L191.8 71 L192.2 71.2 L192.7 71.7 L193.2 72.5 L193.7 73.2 L194.2 73.4 L194.6 73.2 L195.1 72.5 L195.6 71.7 L196.1 71.2 L196.5 71 L197 71.4 L197.5 72 L198 72.8 L198.5 73.3 L198.9 73.4 L199.4 72.9 L199.9 72.2" fill="none" stroke="#f24848" stroke-width="1.3" opacity="0.85"/>
<path d="M188.4 74.8 L188.9 75.5 L189.4 76 L189.8 75.9 L190.3 75.4 L190.8 74.6 L191.3 74 L191.8 73.6 L192.2 73.8 L192.7 74.3 L193.2 75.1 L193.7 75.8 L194.2 76 L194.6 75.8 L195.1 75.1 L195.6 74.3 L196.1 73.8 L196.5 73.6 L197 74 L197.5 74.6 L198 75.4 L198.5 75.9 L198.9 76 L199.4 75.5 L199.9 74.8" fill="none" stroke="#4848f2" stroke-width="1.3" opacity="0.85"/>
<path d="M188.4 78 L188.6 78.3 L188.8 78.6 L189 78.9 L189.2 79.1 L189.4 79.2 L189.7 79.2 L189.9 79.1 L190.1 78.9 L190.3 78.7 L190.5 78.3 L190.7 78 L190.9 77.7 L191.1 77.4 L191.3 77.1 L191.5 76.9 L191.7 76.8 L191.9 76.8 L192.2 76.9 L192.4 77.1 L192.6 77.3 L192.8 77.6 L193 78 L193.2 78.3 L193.4 78.6" fill="none" stroke="#3a9a3a" stroke-width="1.3" opacity="0.85"/>
<path d="M188.4 81 L188.6 81.3 L188.8 81.6 L189 81.9 L189.2 82.1 L189.4 82.2 L189.7 82.2 L189.9 82.1 L190.1 81.9 L190.3 81.7 L190.5 81.3 L190.7 81 L190.9 80.7 L191.1 80.4 L191.3 80.1 L191.5 79.9 L191.7 79.8 L191.9 79.8 L192.2 79.9 L192.4 80.1 L192.6 80.3 L192.8 80.6 L193 81 L193.2 81.3 L193.4 81.6" fill="none" stroke="#a04848" stroke-width="1.3" opacity="0.85"/>
<circle cx="195.9" cy="79.3" r="3.7" fill="#22a022"/><circle cx="195.9" cy="78.5" r="2.4" fill="#40c040" opacity="0.6"/>
<text x="195.9" y="81.6" font-family="Liberation Sans" font-weight="bold" font-size="5.5" fill="#e8ffe8" text-anchor="middle">2</text>
<line x1="204.3" y1="69" x2="204.3" y2="86" stroke="#c4c4c4" stroke-width="1"/><line x1="205.3" y1="69" x2="205.3" y2="86" stroke="#ffffff" stroke-width="1"/>
<rect x="205.5" y="67.5" width="118" height="18.5" fill="#fcfcfc"/>
<line x1="207" y1="86.3" x2="323.5" y2="86.3" stroke="#c8c8c8" stroke-width="1.2"/>
<text x="228.5" y="80" font-family="Liberation Sans" font-size="8.8" fill="#383850" textLength="75" lengthAdjust="spacingAndGlyphs">Рабочее окружение</text>
<polygon points="322.5,80.5 322.5,84 319,84" fill="#202020"/>
<line x1="324.5" y1="69" x2="324.5" y2="86" stroke="#c4c4c4" stroke-width="1"/><line x1="325.5" y1="69" x2="325.5" y2="86" stroke="#ffffff" stroke-width="1"/>
<path d="M330.5 80.5 Q330 74.5 335.5 74 Q340 74 340.5 79" fill="none" stroke="#6aa4d8" stroke-width="2.2"/>
<polygon points="328.3,76.8 333.6,77.6 330.2,81.6" fill="#78b0e0"/>
<polygon points="342.8,80 342.8,83.5 339.3,83.5" fill="#101010"/>
<rect x="346.8" y="71.2" width="10.2" height="10" rx="0.8" fill="#4848c8"/>
<rect x="346.8" y="71.2" width="2.5" height="10" fill="#7a7ae0" opacity="0.7"/>
<rect x="349.3" y="72.2" width="5.199999999999999" height="4.2" fill="#f4f8ff"/>
<rect x="349.8" y="78" width="3.5" height="3.2" fill="#202040"/>
<rect x="350.8" y="78.7" width="1.2" height="2" fill="#c8c8d8"/>
<rect x="352" y="75.8" width="7.2" height="7" fill="#dfe6f2" stroke="#8090b8" stroke-width="0.8"/><line x1="353.5" y1="79" x2="357.5" y2="79" stroke="#8090b8" stroke-width="0.6"/><line x1="353.5" y1="80.8" x2="357.5" y2="80.8" stroke="#8090b8" stroke-width="0.6"/>
<line x1="364.2" y1="69" x2="364.2" y2="86" stroke="#c4c4c4" stroke-width="1"/><line x1="365.2" y1="69" x2="365.2" y2="86" stroke="#ffffff" stroke-width="1"/>
<path d="M370.5 78.5 Q371 76.2 374 75.8 L376.5 73.8 Q379.5 73 381.8 74.8 L382.2 77.3 Q381.5 79.5 377 80 L372.5 80.2 Q370.5 80 370.5 78.5 Z" fill="#e02020"/>
<path d="M375 75.5 L377 74.2 Q379.5 73.8 380.8 75 L378.5 76 Z" fill="#ffb0b0" opacity="0.7"/>
<circle cx="373.5" cy="79.6" r="0.9" fill="#501010"/><circle cx="379.5" cy="79" r="0.9" fill="#501010"/>
<polygon points="384,81 384,84.3 380.7,84.3" fill="#101010"/>
<line x1="387.4" y1="69" x2="387.4" y2="86" stroke="#c4c4c4" stroke-width="1"/><line x1="388.4" y1="69" x2="388.4" y2="86" stroke="#ffffff" stroke-width="1"/>
<path d="M402.5 72.8 A2.6 2.6 0 1 0 402.6 76" fill="none" stroke="#50688a" stroke-width="1.2"/><polygon points="401.5,73.2 404,74.3 401.5,75.6" fill="#50688a"/>
<rect x="394.5" y="78.5" width="11" height="4" rx="0.8" fill="#f6f2c8" stroke="#8aa0c8" stroke-width="0.9"/>
<line x1="396" y1="80.8" x2="404" y2="80.8" stroke="#a09850" stroke-width="1" stroke-dasharray="1 1"/>
<rect x="413" y="73" width="9" height="8.6" fill="#fff" stroke="#8a8a8a" stroke-width="1.2"/>
<line x1="413" y1="77.4" x2="422" y2="77.4" stroke="#9010a0" stroke-width="1.4"/><line x1="417.5" y1="74" x2="417.5" y2="81" stroke="#9010a0" stroke-width="1.4"/>
<rect x="0" y="87" width="17" height="452" fill="#fcfcfc"/>
<rect x="2.6" y="89.1" width="12.8" height="11.2" fill="#a81414"/><rect x="2.6" y="89.1" width="12.8" height="4" fill="#c02828" opacity="0.6"/>
<text x="9" y="98.6" text-anchor="middle" font-family="Liberation Sans" font-weight="bold" font-size="9.5" fill="#fff">4</text>
<line x1="2" y1="102.5" x2="16" y2="102.5" stroke="#d0d0d0" stroke-width="1.2"/>
<circle cx="8.5" cy="111.1" r="4.3" fill="#b8dcf0" stroke="#9aa8b0" stroke-width="1"/>
<circle cx="8.5" cy="125.4" r="4.3" fill="#b8dcf0" stroke="#9aa8b0" stroke-width="1"/>
<circle cx="8.5" cy="140.2" r="4.3" fill="#b8dcf0" stroke="#9aa8b0" stroke-width="1"/>
<line x1="6.3" y1="111.1" x2="10.7" y2="111.1" stroke="#3050b0" stroke-width="1.2"/>
<rect x="6" y="123.7" width="5" height="3.3" fill="#e8f4fa" stroke="#607080" stroke-width="0.7"/>
<path d="M8.5 138.3 V142.1 M6.6 140.2 H10.4" stroke="#d02020" stroke-width="1.3"/>
<line x1="2" y1="149.6" x2="16" y2="149.6" stroke="#d0d0d0" stroke-width="1.2"/>
<polygon points="5.2,157 8.5,154.4 11.8,157 8.5,159.6" fill="#3a78d8"/>
<circle cx="8.5" cy="161.3" r="2.1" fill="#3a78d8"/>
<polygon points="5.2,170.3 8.5,167.7 11.8,170.3 8.5,172.9" fill="#3a78d8"/>
<polygon points="5.2,176.2 8.5,173.6 11.8,176.2 8.5,178.8" fill="#3a78d8"/>
<circle cx="8.5" cy="184.5" r="2.1" fill="#3a78d8"/>
<polygon points="5.2,189 8.5,186.4 11.8,189 8.5,191.6" fill="#3a78d8"/>
<line x1="2" y1="196.6" x2="16" y2="196.6" stroke="#d0d0d0" stroke-width="1.2"/>
<polygon points="8.5,201 13,205.5 10.5,205.5 10.5,209 6.5,209 6.5,205.5 4,205.5" fill="#38a838"/>
<polygon points="8.5,224.5 13,220 10.5,220 10.5,216 6.5,216 6.5,220 4,220" fill="#38a838"/>
<line x1="2" y1="228.6" x2="16" y2="228.6" stroke="#d0d0d0" stroke-width="1.2"/>
<line x1="5" y1="233" x2="5" y2="242.5" stroke="#303030" stroke-width="1.2"/><line x1="3.5" y1="233" x2="6.5" y2="233" stroke="#303030" stroke-width="1"/><line x1="3.5" y1="242.5" x2="6.5" y2="242.5" stroke="#303030" stroke-width="1"/>
<line x1="6" y1="235.3" x2="13.5" y2="235.3" stroke="#b0b0b0" stroke-width="1"/><line x1="6" y1="237.7" x2="13.5" y2="237.7" stroke="#b0b0b0" stroke-width="1"/><line x1="6" y1="240" x2="13.5" y2="240" stroke="#b0b0b0" stroke-width="1"/>
<ellipse cx="6.6" cy="255" rx="1.3" ry="1.8" fill="none" stroke="#404040" stroke-width="1"/><rect x="6" y="247.5" width="1.4" height="1.6" fill="#505050"/><rect x="5.6" y="250" width="2.2" height="1" fill="#303030"/><line x1="10.4" y1="247.5" x2="10.4" y2="256.5" stroke="#505050" stroke-width="1.3"/><line x1="9.2" y1="247.6" x2="11.8" y2="247.6" stroke="#808080" stroke-width="0.9"/><line x1="9" y1="256.6" x2="12" y2="256.6" stroke="#303030" stroke-width="1"/>
<rect x="1.5" y="260" width="14.5" height="14.2" fill="#f6e8b0" stroke="#80b4f0" stroke-width="1.4"/>
<text x="3.2" y="270.3" font-family="Liberation Sans" font-weight="bold" font-size="7" fill="#2a2a88" textLength="11" lengthAdjust="spacingAndGlyphs">Abc</text>
<rect x="2.8" y="276.2" width="12" height="11" fill="#f2e6b8" stroke="#d8cc98" stroke-width="0.8"/>
<polygon points="6,278 8.5,281 3.5,281" fill="#c02020"/><polygon points="6,285.5 8.5,282.5 3.5,282.5" fill="#2030b0"/>
<line x1="9" y1="279.5" x2="13" y2="279.5" stroke="#c070c0" stroke-width="1"/><line x1="9" y1="284" x2="13" y2="284" stroke="#40a040" stroke-width="1"/>
<rect x="2.8" y="290.2" width="12" height="11" fill="#f2e6b8" stroke="#d8cc98" stroke-width="0.8"/>
<text x="3.3" y="299" font-family="Liberation Sans" font-weight="bold" font-size="6.5" fill="#9020a0">T</text><text x="6.6" y="300" font-family="Liberation Sans" font-size="4" fill="#9020a0">1</text><text x="8.9" y="299" font-family="Liberation Sans" font-weight="bold" font-size="6.5" fill="#20a020">T</text><text x="12.2" y="300" font-family="Liberation Sans" font-size="4" fill="#20a020">2</text>
<line x1="2" y1="304.5" x2="16" y2="304.5" stroke="#d0d0d0" stroke-width="1.2"/>
<rect x="1.5" y="306.6" width="14.5" height="14.2" fill="#e8eef4" stroke="#80b4f0" stroke-width="1.4"/>
<rect x="3.2" y="308.5" width="11" height="10.5" fill="#f8f8f8" stroke="#b8b8b8" stroke-width="0.8"/>
<line x1="4.8" y1="309" x2="4.8" y2="318.5" stroke="#e03030" stroke-width="1.1"/><path d="M5 315 L7.5 311.5 L10 314 L12.5 312" fill="none" stroke="#f04848" stroke-width="1"/>
<rect x="3.2" y="323.3" width="11" height="10" fill="#f0f0f0" stroke="#c0c0c0" stroke-width="0.8"/>
<path d="M4 329 Q6.5 325 8.5 328 T13 328" fill="none" stroke="#3050e0" stroke-width="1"/><line x1="12.8" y1="323.5" x2="12.8" y2="333" stroke="#3050e0" stroke-width="1.2"/>
<line x1="22.5" y1="101" x2="25" y2="101" stroke="#30a030" stroke-width="1.1" opacity="0.75"/>
<line x1="22.5" y1="101.8" x2="25" y2="101.8" stroke="#2030c0" stroke-width="1.1" opacity="0.75"/>
<line x1="22.5" y1="107.5" x2="25" y2="107.5" stroke="#c04040" stroke-width="1.1" opacity="0.75"/>
<line x1="22.5" y1="115" x2="25" y2="115" stroke="#3030c0" stroke-width="1.1" opacity="0.75"/>
<line x1="22.5" y1="116.5" x2="25" y2="116.5" stroke="#30a030" stroke-width="1.1" opacity="0.75"/>
<line x1="22.5" y1="122" x2="25" y2="122" stroke="#c04040" stroke-width="1.1" opacity="0.75"/>
<line x1="22.5" y1="124.5" x2="25" y2="124.5" stroke="#30a030" stroke-width="1.1" opacity="0.75"/>
<line x1="22.5" y1="126" x2="25" y2="126" stroke="#3030c0" stroke-width="1.1" opacity="0.75"/>
<line x1="22.5" y1="130" x2="25" y2="130" stroke="#c04040" stroke-width="1.1" opacity="0.75"/>
<line x1="22.5" y1="131.5" x2="25" y2="131.5" stroke="#3030c0" stroke-width="1.1" opacity="0.75"/>
<line x1="22.5" y1="137" x2="25" y2="137" stroke="#30a030" stroke-width="1.1" opacity="0.75"/>
<line x1="22.5" y1="140" x2="25" y2="140" stroke="#c04040" stroke-width="1.1" opacity="0.75"/>
<line x1="22.5" y1="141" x2="25" y2="141" stroke="#3030c0" stroke-width="1.1" opacity="0.75"/>
<line x1="22.5" y1="149.5" x2="25" y2="149.5" stroke="#30a030" stroke-width="1.1" opacity="0.75"/>
<line x1="22.5" y1="151.8" x2="25" y2="151.8" stroke="#c04040" stroke-width="1.1" opacity="0.75"/>
<line x1="22.5" y1="153" x2="25" y2="153" stroke="#3030c0" stroke-width="1.1" opacity="0.75"/>
<line x1="22.5" y1="158" x2="25" y2="158" stroke="#30a030" stroke-width="1.1" opacity="0.75"/>
<line x1="22.5" y1="161" x2="25" y2="161" stroke="#c04040" stroke-width="1.1" opacity="0.75"/>
<line x1="22.5" y1="163" x2="25" y2="163" stroke="#3030c0" stroke-width="1.1" opacity="0.75"/>
<line x1="22.5" y1="172.5" x2="25" y2="172.5" stroke="#303030" stroke-width="1.1" opacity="0.75"/>
<line x1="22.5" y1="176" x2="25" y2="176" stroke="#3030c0" stroke-width="1.1" opacity="0.75"/>
<line x1="22.5" y1="184.5" x2="25" y2="184.5" stroke="#c04040" stroke-width="1.1" opacity="0.75"/>
<line x1="22.5" y1="186" x2="25" y2="186" stroke="#30a030" stroke-width="1.1" opacity="0.75"/>
<line x1="22.5" y1="187.5" x2="25" y2="187.5" stroke="#3030c0" stroke-width="1.1" opacity="0.75"/>
<line x1="22.5" y1="195" x2="25" y2="195" stroke="#c04040" stroke-width="1.1" opacity="0.75"/>
<line x1="22.5" y1="198.7" x2="25" y2="198.7" stroke="#3030c0" stroke-width="1.1" opacity="0.75"/>
<line x1="22.5" y1="199.3" x2="25" y2="199.3" stroke="#30a030" stroke-width="1.1" opacity="0.75"/>
<line x1="22.5" y1="205" x2="25" y2="205" stroke="#c04040" stroke-width="1.1" opacity="0.75"/>
<line x1="22.5" y1="211.5" x2="25" y2="211.5" stroke="#3030c0" stroke-width="1.1" opacity="0.75"/>
<line x1="22.5" y1="216.5" x2="25" y2="216.5" stroke="#30a030" stroke-width="1.1" opacity="0.75"/>
<line x1="22.5" y1="218.5" x2="25" y2="218.5" stroke="#c04040" stroke-width="1.1" opacity="0.75"/>
<line x1="22.5" y1="222" x2="25" y2="222" stroke="#3030c0" stroke-width="1.1" opacity="0.75"/>
<line x1="22.5" y1="224.5" x2="25" y2="224.5" stroke="#30a030" stroke-width="1.1" opacity="0.75"/>
<line x1="22.5" y1="227" x2="25" y2="227" stroke="#c04040" stroke-width="1.1" opacity="0.75"/>
<line x1="22.5" y1="234" x2="25" y2="234" stroke="#3030c0" stroke-width="1.1" opacity="0.75"/>
<line x1="22.5" y1="238" x2="25" y2="238" stroke="#303030" stroke-width="1.1" opacity="0.75"/>
<line x1="22.5" y1="245" x2="25" y2="245" stroke="#3030c0" stroke-width="1.1" opacity="0.75"/>
<line x1="22.5" y1="249.5" x2="25" y2="249.5" stroke="#c04040" stroke-width="1.1" opacity="0.75"/>
<line x1="22.5" y1="251" x2="25" y2="251" stroke="#30a030" stroke-width="1.1" opacity="0.75"/>
<line x1="22.5" y1="256.5" x2="25" y2="256.5" stroke="#3030c0" stroke-width="1.1" opacity="0.75"/>
<line x1="22.5" y1="262" x2="25" y2="262" stroke="#c04040" stroke-width="1.1" opacity="0.75"/>
<line x1="22.5" y1="264" x2="25" y2="264" stroke="#30a030" stroke-width="1.1" opacity="0.75"/>
<line x1="22.5" y1="275.5" x2="25" y2="275.5" stroke="#30a030" stroke-width="1.1" opacity="0.75"/>
<line x1="22.5" y1="277" x2="25" y2="277" stroke="#3030c0" stroke-width="1.1" opacity="0.75"/>
<line x1="22.5" y1="282" x2="25" y2="282" stroke="#c04040" stroke-width="1.1" opacity="0.75"/>
<line x1="22.5" y1="287" x2="25" y2="287" stroke="#30a030" stroke-width="1.1" opacity="0.75"/>
<line x1="22.5" y1="302.5" x2="25" y2="302.5" stroke="#3030c0" stroke-width="1.1" opacity="0.75"/>
<line x1="22.5" y1="304" x2="25" y2="304" stroke="#303030" stroke-width="1.1" opacity="0.75"/>
<line x1="22.5" y1="314.5" x2="25" y2="314.5" stroke="#3030c0" stroke-width="1.1" opacity="0.75"/>
<line x1="22.5" y1="315.5" x2="25" y2="315.5" stroke="#c04040" stroke-width="1.1" opacity="0.75"/>
<line x1="22.5" y1="317.5" x2="25" y2="317.5" stroke="#30a030" stroke-width="1.1" opacity="0.75"/>
<line x1="22.5" y1="326" x2="25" y2="326" stroke="#3030c0" stroke-width="1.1" opacity="0.75"/>
<line x1="22.5" y1="329" x2="25" y2="329" stroke="#c04040" stroke-width="1.1" opacity="0.75"/>
<line x1="22.5" y1="330" x2="25" y2="330" stroke="#30a030" stroke-width="1.1" opacity="0.75"/>
<line x1="22.5" y1="339" x2="25" y2="339" stroke="#3030c0" stroke-width="1.1" opacity="0.75"/>
<line x1="22.5" y1="349" x2="25" y2="349" stroke="#c04040" stroke-width="1.1" opacity="0.75"/>
<line x1="22.5" y1="350" x2="25" y2="350" stroke="#3030c0" stroke-width="1.1" opacity="0.75"/>
<line x1="22.5" y1="356" x2="25" y2="356" stroke="#30a030" stroke-width="1.1" opacity="0.75"/>
<line x1="22.5" y1="360.5" x2="25" y2="360.5" stroke="#3030c0" stroke-width="1.1" opacity="0.75"/>
<line x1="22.5" y1="370" x2="25" y2="370" stroke="#30a030" stroke-width="1.1" opacity="0.75"/>
<line x1="22.5" y1="383" x2="25" y2="383" stroke="#3030c0" stroke-width="1.1" opacity="0.75"/>
<line x1="22.5" y1="393" x2="25" y2="393" stroke="#c04040" stroke-width="1.1" opacity="0.75"/>
<line x1="22.5" y1="396" x2="25" y2="396" stroke="#30a030" stroke-width="1.1" opacity="0.75"/>
<line x1="22.5" y1="403" x2="25" y2="403" stroke="#3030c0" stroke-width="1.1" opacity="0.75"/>
<line x1="22.5" y1="409" x2="25" y2="409" stroke="#30a030" stroke-width="1.1" opacity="0.75"/>
<line x1="22.5" y1="416" x2="25" y2="416" stroke="#c04040" stroke-width="1.1" opacity="0.75"/>
<line x1="22.5" y1="423" x2="25" y2="423" stroke="#30a030" stroke-width="1.1" opacity="0.75"/>
<line x1="22.5" y1="426" x2="25" y2="426" stroke="#c04040" stroke-width="1.1" opacity="0.75"/>
<line x1="22.5" y1="429" x2="25" y2="429" stroke="#3030c0" stroke-width="1.1" opacity="0.75"/>
<line x1="22.5" y1="435" x2="25" y2="435" stroke="#30a030" stroke-width="1.1" opacity="0.75"/>
<line x1="22.5" y1="446" x2="25" y2="446" stroke="#303030" stroke-width="1.1" opacity="0.75"/>
<line x1="22.5" y1="451" x2="25" y2="451" stroke="#c04040" stroke-width="1.1" opacity="0.75"/>
<line x1="22.5" y1="456" x2="25" y2="456" stroke="#30a030" stroke-width="1.1" opacity="0.75"/>
<line x1="22.5" y1="465" x2="25" y2="465" stroke="#c04040" stroke-width="1.1" opacity="0.75"/>
<line x1="22.5" y1="473" x2="25" y2="473" stroke="#30a030" stroke-width="1.1" opacity="0.75"/>
<line x1="22.5" y1="480" x2="25" y2="480" stroke="#c04040" stroke-width="1.1" opacity="0.75"/>
<line x1="22.5" y1="485" x2="25" y2="485" stroke="#30a030" stroke-width="1.1" opacity="0.75"/>
<rect x="18" y="516.6" width="13.5" height="12.6" fill="#f4fbfb"/>
<path d="M18 528.6 H30.9 V516.6" fill="none" stroke="#a8a8a0" stroke-width="1.3"/>
<rect x="32" y="516.6" width="28.6" height="12.6" fill="#f4fbfb"/>
<path d="M32 528.6 H60 V516.6" fill="none" stroke="#a8a8a0" stroke-width="1.3"/>
<rect x="61.2" y="516.6" width="14.2" height="12.6" fill="#f4fbfb"/>
<path d="M61.2 528.6 H74.8 V516.6" fill="none" stroke="#a8a8a0" stroke-width="1.3"/>
<rect x="76" y="516.6" width="12.2" height="12.6" fill="#f4fbfb"/>
<path d="M76 528.6 H87.6 V516.6" fill="none" stroke="#a8a8a0" stroke-width="1.3"/>
<circle cx="25" cy="522.8" r="4" fill="#fff" stroke="#404040" stroke-width="0.9"/><line x1="23" y1="522.8" x2="27" y2="522.8" stroke="#3040a0" stroke-width="1.3"/>
<text x="46.3" y="526.8" text-anchor="middle" font-family="Liberation Sans" font-size="9" fill="#404040">2:1</text>
<circle cx="68.6" cy="522.8" r="4" fill="#fff" stroke="#404040" stroke-width="0.9"/><path d="M68.6 520.6 V525 M66.4 522.8 H70.8" stroke="#c01818" stroke-width="1.4"/>
<polygon points="80.2,522.8 83,520.5 83,525.1" fill="#101010"/>
<rect x="324.4" y="516.8" width="30" height="12" fill="#f4fbfb"/>
<path d="M324.4 528.2 H353.8 V516.8" fill="none" stroke="#a8a8a0" stroke-width="1.3"/>
<rect x="988" y="517.6" width="11" height="11.6" fill="#f4fbfb"/>
<path d="M988 528.6 H998.4 V517.6" fill="none" stroke="#a8a8a0" stroke-width="1.3"/>
<polygon points="996,523.4 993.2,521.1 993.2,525.7" fill="#101010"/>
<rect x="300.5" y="532.2" width="399" height="5.6" fill="#fafcff" stroke="#c8c8c8" stroke-width="0.8"/>
<line x1="303" y1="535.2" x2="697" y2="535.2" stroke="#90b0e0" stroke-width="1.1" stroke-dasharray="1 2"/>
<polygon points="303.8,537 306.3,534.3 308.8,537" fill="#5a8ed8"/>
<polygon points="691.3,537 693.8,534.3 696.3,537" fill="#5a8ed8"/>

</svg>
</body></html>
